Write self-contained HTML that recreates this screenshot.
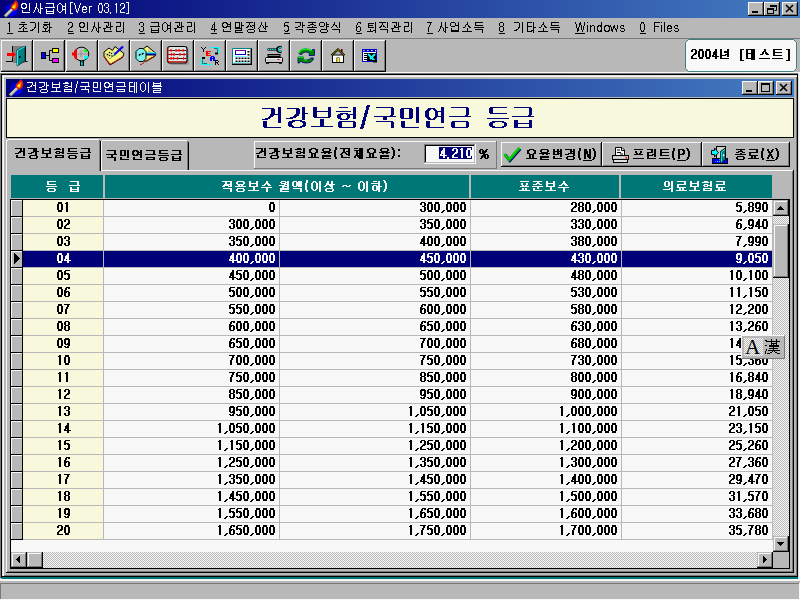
<!DOCTYPE html>
<html><head><meta charset="utf-8"><style>
html,body{margin:0;padding:0;width:800px;height:600px;overflow:hidden;background:#b8b8b8;font-family:"Liberation Sans",sans-serif;}
div{position:absolute;box-sizing:border-box;}
svg.ov{position:absolute;left:0;top:0;width:800px;height:600px;}
</style></head><body>
<div style="left:0px;top:0px;width:800px;height:18px;background:linear-gradient(to right,#000078 0%,#447cc1 100%);"></div>
<div style="left:748px;top:2px;width:16px;height:14px;background:#b8b8b8;"></div>
<div style="left:748px;top:2px;width:16px;height:1px;background:#f8f8f8;"></div>
<div style="left:748px;top:2px;width:1px;height:14px;background:#f8f8f8;"></div>
<div style="left:748px;top:15px;width:16px;height:1px;background:#000;"></div>
<div style="left:763px;top:2px;width:1px;height:14px;background:#000;"></div>
<div style="left:749px;top:14px;width:14px;height:1px;background:#787878;"></div>
<div style="left:762px;top:3px;width:1px;height:12px;background:#787878;"></div>
<div style="left:764px;top:2px;width:16px;height:14px;background:#b8b8b8;"></div>
<div style="left:764px;top:2px;width:16px;height:1px;background:#f8f8f8;"></div>
<div style="left:764px;top:2px;width:1px;height:14px;background:#f8f8f8;"></div>
<div style="left:764px;top:15px;width:16px;height:1px;background:#000;"></div>
<div style="left:779px;top:2px;width:1px;height:14px;background:#000;"></div>
<div style="left:765px;top:14px;width:14px;height:1px;background:#787878;"></div>
<div style="left:778px;top:3px;width:1px;height:12px;background:#787878;"></div>
<div style="left:782px;top:2px;width:16px;height:14px;background:#b8b8b8;"></div>
<div style="left:782px;top:2px;width:16px;height:1px;background:#f8f8f8;"></div>
<div style="left:782px;top:2px;width:1px;height:14px;background:#f8f8f8;"></div>
<div style="left:782px;top:15px;width:16px;height:1px;background:#000;"></div>
<div style="left:797px;top:2px;width:1px;height:14px;background:#000;"></div>
<div style="left:783px;top:14px;width:14px;height:1px;background:#787878;"></div>
<div style="left:796px;top:3px;width:1px;height:12px;background:#787878;"></div>
<div style="left:7px;top:33px;width:6px;height:1px;background:#000;"></div>
<div style="left:68px;top:33px;width:6px;height:1px;background:#000;"></div>
<div style="left:139px;top:33px;width:6px;height:1px;background:#000;"></div>
<div style="left:211px;top:33px;width:6px;height:1px;background:#000;"></div>
<div style="left:284px;top:33px;width:6px;height:1px;background:#000;"></div>
<div style="left:356px;top:33px;width:6px;height:1px;background:#000;"></div>
<div style="left:427px;top:33px;width:6px;height:1px;background:#000;"></div>
<div style="left:499px;top:33px;width:6px;height:1px;background:#000;"></div>
<div style="left:575px;top:33px;width:10px;height:1px;background:#000;"></div>
<div style="left:640px;top:33px;width:6px;height:1px;background:#000;"></div>
<div style="left:0px;top:38px;width:800px;height:1px;background:#787878;"></div>
<div style="left:1px;top:40px;width:32px;height:32px;background:#b8b8b8;"></div>
<div style="left:1px;top:40px;width:32px;height:1px;background:#f8f8f8;"></div>
<div style="left:1px;top:40px;width:1px;height:32px;background:#f8f8f8;"></div>
<div style="left:1px;top:71px;width:32px;height:1px;background:#000;"></div>
<div style="left:32px;top:40px;width:1px;height:32px;background:#000;"></div>
<div style="left:2px;top:70px;width:30px;height:1px;background:#787878;"></div>
<div style="left:31px;top:41px;width:1px;height:30px;background:#787878;"></div>
<div style="left:33px;top:40px;width:32px;height:32px;background:#b8b8b8;"></div>
<div style="left:33px;top:40px;width:32px;height:1px;background:#f8f8f8;"></div>
<div style="left:33px;top:40px;width:1px;height:32px;background:#f8f8f8;"></div>
<div style="left:33px;top:71px;width:32px;height:1px;background:#000;"></div>
<div style="left:64px;top:40px;width:1px;height:32px;background:#000;"></div>
<div style="left:34px;top:70px;width:30px;height:1px;background:#787878;"></div>
<div style="left:63px;top:41px;width:1px;height:30px;background:#787878;"></div>
<div style="left:66px;top:40px;width:32px;height:32px;background:#b8b8b8;"></div>
<div style="left:66px;top:40px;width:32px;height:1px;background:#f8f8f8;"></div>
<div style="left:66px;top:40px;width:1px;height:32px;background:#f8f8f8;"></div>
<div style="left:66px;top:71px;width:32px;height:1px;background:#000;"></div>
<div style="left:97px;top:40px;width:1px;height:32px;background:#000;"></div>
<div style="left:67px;top:70px;width:30px;height:1px;background:#787878;"></div>
<div style="left:96px;top:41px;width:1px;height:30px;background:#787878;"></div>
<div style="left:98px;top:40px;width:32px;height:32px;background:#b8b8b8;"></div>
<div style="left:98px;top:40px;width:32px;height:1px;background:#f8f8f8;"></div>
<div style="left:98px;top:40px;width:1px;height:32px;background:#f8f8f8;"></div>
<div style="left:98px;top:71px;width:32px;height:1px;background:#000;"></div>
<div style="left:129px;top:40px;width:1px;height:32px;background:#000;"></div>
<div style="left:99px;top:70px;width:30px;height:1px;background:#787878;"></div>
<div style="left:128px;top:41px;width:1px;height:30px;background:#787878;"></div>
<div style="left:130px;top:40px;width:32px;height:32px;background:#b8b8b8;"></div>
<div style="left:130px;top:40px;width:32px;height:1px;background:#f8f8f8;"></div>
<div style="left:130px;top:40px;width:1px;height:32px;background:#f8f8f8;"></div>
<div style="left:130px;top:71px;width:32px;height:1px;background:#000;"></div>
<div style="left:161px;top:40px;width:1px;height:32px;background:#000;"></div>
<div style="left:131px;top:70px;width:30px;height:1px;background:#787878;"></div>
<div style="left:160px;top:41px;width:1px;height:30px;background:#787878;"></div>
<div style="left:162px;top:40px;width:32px;height:32px;background:#b8b8b8;"></div>
<div style="left:162px;top:40px;width:32px;height:1px;background:#f8f8f8;"></div>
<div style="left:162px;top:40px;width:1px;height:32px;background:#f8f8f8;"></div>
<div style="left:162px;top:71px;width:32px;height:1px;background:#000;"></div>
<div style="left:193px;top:40px;width:1px;height:32px;background:#000;"></div>
<div style="left:163px;top:70px;width:30px;height:1px;background:#787878;"></div>
<div style="left:192px;top:41px;width:1px;height:30px;background:#787878;"></div>
<div style="left:194px;top:40px;width:32px;height:32px;background:#b8b8b8;"></div>
<div style="left:194px;top:40px;width:32px;height:1px;background:#f8f8f8;"></div>
<div style="left:194px;top:40px;width:1px;height:32px;background:#f8f8f8;"></div>
<div style="left:194px;top:71px;width:32px;height:1px;background:#000;"></div>
<div style="left:225px;top:40px;width:1px;height:32px;background:#000;"></div>
<div style="left:195px;top:70px;width:30px;height:1px;background:#787878;"></div>
<div style="left:224px;top:41px;width:1px;height:30px;background:#787878;"></div>
<div style="left:226px;top:40px;width:32px;height:32px;background:#b8b8b8;"></div>
<div style="left:226px;top:40px;width:32px;height:1px;background:#f8f8f8;"></div>
<div style="left:226px;top:40px;width:1px;height:32px;background:#f8f8f8;"></div>
<div style="left:226px;top:71px;width:32px;height:1px;background:#000;"></div>
<div style="left:257px;top:40px;width:1px;height:32px;background:#000;"></div>
<div style="left:227px;top:70px;width:30px;height:1px;background:#787878;"></div>
<div style="left:256px;top:41px;width:1px;height:30px;background:#787878;"></div>
<div style="left:258px;top:40px;width:32px;height:32px;background:#b8b8b8;"></div>
<div style="left:258px;top:40px;width:32px;height:1px;background:#f8f8f8;"></div>
<div style="left:258px;top:40px;width:1px;height:32px;background:#f8f8f8;"></div>
<div style="left:258px;top:71px;width:32px;height:1px;background:#000;"></div>
<div style="left:289px;top:40px;width:1px;height:32px;background:#000;"></div>
<div style="left:259px;top:70px;width:30px;height:1px;background:#787878;"></div>
<div style="left:288px;top:41px;width:1px;height:30px;background:#787878;"></div>
<div style="left:290px;top:40px;width:32px;height:32px;background:#b8b8b8;"></div>
<div style="left:290px;top:40px;width:32px;height:1px;background:#f8f8f8;"></div>
<div style="left:290px;top:40px;width:1px;height:32px;background:#f8f8f8;"></div>
<div style="left:290px;top:71px;width:32px;height:1px;background:#000;"></div>
<div style="left:321px;top:40px;width:1px;height:32px;background:#000;"></div>
<div style="left:291px;top:70px;width:30px;height:1px;background:#787878;"></div>
<div style="left:320px;top:41px;width:1px;height:30px;background:#787878;"></div>
<div style="left:322px;top:40px;width:32px;height:32px;background:#b8b8b8;"></div>
<div style="left:322px;top:40px;width:32px;height:1px;background:#f8f8f8;"></div>
<div style="left:322px;top:40px;width:1px;height:32px;background:#f8f8f8;"></div>
<div style="left:322px;top:71px;width:32px;height:1px;background:#000;"></div>
<div style="left:353px;top:40px;width:1px;height:32px;background:#000;"></div>
<div style="left:323px;top:70px;width:30px;height:1px;background:#787878;"></div>
<div style="left:352px;top:41px;width:1px;height:30px;background:#787878;"></div>
<div style="left:354px;top:40px;width:32px;height:32px;background:#b8b8b8;"></div>
<div style="left:354px;top:40px;width:32px;height:1px;background:#f8f8f8;"></div>
<div style="left:354px;top:40px;width:1px;height:32px;background:#f8f8f8;"></div>
<div style="left:354px;top:71px;width:32px;height:1px;background:#000;"></div>
<div style="left:385px;top:40px;width:1px;height:32px;background:#000;"></div>
<div style="left:355px;top:70px;width:30px;height:1px;background:#787878;"></div>
<div style="left:384px;top:41px;width:1px;height:30px;background:#787878;"></div>
<div style="left:0px;top:72px;width:800px;height:1px;background:#f8f8f8;"></div>
<div style="left:0px;top:73px;width:800px;height:1px;background:#787878;"></div>
<div style="left:0px;top:74px;width:800px;height:1px;background:#000;"></div>
<div style="left:0px;top:73px;width:1px;height:505px;background:#787878;"></div>
<div style="left:1px;top:74px;width:1px;height:504px;background:#000;"></div>
<div style="left:2px;top:577px;width:796px;height:2px;background:#007777;"></div>
<div style="left:0px;top:579px;width:800px;height:1px;background:#f8f8f8;"></div>
<div style="left:798px;top:73px;width:1px;height:506px;background:#dfdfdf;"></div>
<div style="left:799px;top:73px;width:1px;height:506px;background:#f8f8f8;"></div>
<div style="left:0px;top:580px;width:800px;height:1px;background:#f8f8f8;"></div>
<div style="left:0px;top:583px;width:800px;height:1px;background:#787878;"></div>
<div style="left:0px;top:583px;width:1px;height:17px;background:#787878;"></div>
<div style="left:0px;top:599px;width:800px;height:1px;background:#f8f8f8;"></div>
<div style="left:799px;top:583px;width:1px;height:17px;background:#f8f8f8;"></div>
<div style="left:2px;top:75px;width:796px;height:502px;background:#b8b8b8;"></div>
<div style="left:2px;top:75px;width:796px;height:1px;background:#dfdfdf;"></div>
<div style="left:2px;top:75px;width:1px;height:502px;background:#dfdfdf;"></div>
<div style="left:2px;top:576px;width:796px;height:1px;background:#000;"></div>
<div style="left:797px;top:75px;width:1px;height:502px;background:#000;"></div>
<div style="left:3px;top:575px;width:794px;height:1px;background:#787878;"></div>
<div style="left:796px;top:76px;width:1px;height:500px;background:#787878;"></div>
<div style="left:3px;top:76px;width:794px;height:1px;background:#f8f8f8;"></div>
<div style="left:3px;top:76px;width:1px;height:500px;background:#f8f8f8;"></div>
<div style="left:6px;top:79px;width:788px;height:18px;background:linear-gradient(to right,#000078 0%,#447cc1 100%);"></div>
<div style="left:742px;top:81px;width:16px;height:14px;background:#b8b8b8;"></div>
<div style="left:742px;top:81px;width:16px;height:1px;background:#f8f8f8;"></div>
<div style="left:742px;top:81px;width:1px;height:14px;background:#f8f8f8;"></div>
<div style="left:742px;top:94px;width:16px;height:1px;background:#000;"></div>
<div style="left:757px;top:81px;width:1px;height:14px;background:#000;"></div>
<div style="left:743px;top:93px;width:14px;height:1px;background:#787878;"></div>
<div style="left:756px;top:82px;width:1px;height:12px;background:#787878;"></div>
<div style="left:758px;top:81px;width:16px;height:14px;background:#b8b8b8;"></div>
<div style="left:758px;top:81px;width:16px;height:1px;background:#f8f8f8;"></div>
<div style="left:758px;top:81px;width:1px;height:14px;background:#f8f8f8;"></div>
<div style="left:758px;top:94px;width:16px;height:1px;background:#000;"></div>
<div style="left:773px;top:81px;width:1px;height:14px;background:#000;"></div>
<div style="left:759px;top:93px;width:14px;height:1px;background:#787878;"></div>
<div style="left:772px;top:82px;width:1px;height:12px;background:#787878;"></div>
<div style="left:776px;top:81px;width:16px;height:14px;background:#b8b8b8;"></div>
<div style="left:776px;top:81px;width:16px;height:1px;background:#f8f8f8;"></div>
<div style="left:776px;top:81px;width:1px;height:14px;background:#f8f8f8;"></div>
<div style="left:776px;top:94px;width:16px;height:1px;background:#000;"></div>
<div style="left:791px;top:81px;width:1px;height:14px;background:#000;"></div>
<div style="left:777px;top:93px;width:14px;height:1px;background:#787878;"></div>
<div style="left:790px;top:82px;width:1px;height:12px;background:#787878;"></div>
<div style="left:6px;top:98px;width:788px;height:40px;background:#f8f8dc;border:1px solid #000;"></div>
<div style="left:6px;top:140px;width:1px;height:433px;background:#f8f8f8;"></div>
<div style="left:100px;top:170px;width:693px;height:1px;background:#f8f8f8;"></div>
<div style="left:793px;top:170px;width:1px;height:403px;background:#000;"></div>
<div style="left:792px;top:171px;width:1px;height:401px;background:#787878;"></div>
<div style="left:6px;top:572px;width:788px;height:1px;background:#000;"></div>
<div style="left:7px;top:571px;width:786px;height:1px;background:#787878;"></div>
<div style="left:8px;top:139px;width:91px;height:1px;background:#f8f8f8;"></div>
<div style="left:7px;top:140px;width:1px;height:1px;background:#f8f8f8;"></div>
<div style="left:99px;top:140px;width:1px;height:31px;background:#787878;"></div>
<div style="left:100px;top:141px;width:1px;height:30px;background:#000;"></div>
<div style="left:102px;top:140px;width:85px;height:1px;background:#f8f8f8;"></div>
<div style="left:101px;top:141px;width:1px;height:29px;background:#f8f8f8;"></div>
<div style="left:187px;top:141px;width:1px;height:29px;background:#787878;"></div>
<div style="left:188px;top:142px;width:1px;height:28px;background:#000;"></div>
<div style="left:254px;top:141px;width:243px;height:28px;background:#b8b8b8;"></div>
<div style="left:254px;top:141px;width:243px;height:1px;background:#f8f8f8;"></div>
<div style="left:254px;top:141px;width:1px;height:28px;background:#f8f8f8;"></div>
<div style="left:254px;top:168px;width:243px;height:1px;background:#787878;"></div>
<div style="left:496px;top:141px;width:1px;height:28px;background:#787878;"></div>
<div style="left:424px;top:144px;width:52px;height:20px;background:#f8f8f8;"></div>
<div style="left:424px;top:144px;width:52px;height:1px;background:#787878;"></div>
<div style="left:424px;top:144px;width:1px;height:20px;background:#787878;"></div>
<div style="left:424px;top:163px;width:52px;height:1px;background:#f8f8f8;"></div>
<div style="left:475px;top:144px;width:1px;height:20px;background:#f8f8f8;"></div>
<div style="left:425px;top:145px;width:50px;height:1px;background:#000;"></div>
<div style="left:425px;top:145px;width:1px;height:18px;background:#000;"></div>
<div style="left:425px;top:162px;width:50px;height:1px;background:#b8b8b8;"></div>
<div style="left:474px;top:145px;width:1px;height:18px;background:#b8b8b8;"></div>
<div style="left:439px;top:147px;width:33px;height:12px;background:#000078;"></div>
<div style="left:501px;top:142px;width:101px;height:25px;background:#b8b8b8;"></div>
<div style="left:501px;top:142px;width:101px;height:1px;background:#f8f8f8;"></div>
<div style="left:501px;top:142px;width:1px;height:25px;background:#f8f8f8;"></div>
<div style="left:501px;top:166px;width:101px;height:1px;background:#000;"></div>
<div style="left:601px;top:142px;width:1px;height:25px;background:#000;"></div>
<div style="left:502px;top:165px;width:99px;height:1px;background:#787878;"></div>
<div style="left:600px;top:143px;width:1px;height:23px;background:#787878;"></div>
<div style="left:602px;top:142px;width:100px;height:25px;background:#b8b8b8;"></div>
<div style="left:602px;top:142px;width:100px;height:1px;background:#f8f8f8;"></div>
<div style="left:602px;top:142px;width:1px;height:25px;background:#f8f8f8;"></div>
<div style="left:602px;top:166px;width:100px;height:1px;background:#000;"></div>
<div style="left:701px;top:142px;width:1px;height:25px;background:#000;"></div>
<div style="left:603px;top:165px;width:98px;height:1px;background:#787878;"></div>
<div style="left:700px;top:143px;width:1px;height:23px;background:#787878;"></div>
<div style="left:702px;top:142px;width:88px;height:25px;background:#b8b8b8;"></div>
<div style="left:702px;top:142px;width:88px;height:1px;background:#f8f8f8;"></div>
<div style="left:702px;top:142px;width:1px;height:25px;background:#f8f8f8;"></div>
<div style="left:702px;top:166px;width:88px;height:1px;background:#000;"></div>
<div style="left:789px;top:142px;width:1px;height:25px;background:#000;"></div>
<div style="left:703px;top:165px;width:86px;height:1px;background:#787878;"></div>
<div style="left:788px;top:143px;width:1px;height:23px;background:#787878;"></div>
<div style="left:583px;top:160px;width:9px;height:1px;background:#000;"></div>
<div style="left:677px;top:160px;width:9px;height:1px;background:#000;"></div>
<div style="left:766px;top:160px;width:9px;height:1px;background:#000;"></div>
<div style="left:11px;top:175px;width:92px;height:23px;background:#007777;"></div>
<div style="left:105px;top:175px;width:364px;height:23px;background:#007777;"></div>
<div style="left:471px;top:175px;width:148px;height:23px;background:#007777;"></div>
<div style="left:621px;top:175px;width:151px;height:23px;background:#007777;"></div>
<div style="left:10px;top:199px;width:780px;height:370px;background:#000;"></div>
<div style="left:11px;top:200px;width:778px;height:368px;background:#f8f8f8;"></div>
<div style="left:11px;top:200px;width:12px;height:17px;background:#b8b8b8;"></div>
<div style="left:11px;top:200px;width:12px;height:1px;background:#f8f8f8;"></div>
<div style="left:11px;top:200px;width:1px;height:17px;background:#f8f8f8;"></div>
<div style="left:11px;top:216px;width:12px;height:1px;background:#000;"></div>
<div style="left:22px;top:200px;width:1px;height:17px;background:#000;"></div>
<div style="left:23px;top:200px;width:80px;height:16px;background:#f8f8dc;"></div>
<div style="left:23px;top:216px;width:749px;height:1px;background:#b8b8b8;"></div>
<div style="left:103px;top:200px;width:1px;height:17px;background:#b8b8b8;"></div>
<div style="left:279px;top:200px;width:1px;height:17px;background:#b8b8b8;"></div>
<div style="left:470px;top:200px;width:1px;height:17px;background:#b8b8b8;"></div>
<div style="left:621px;top:200px;width:1px;height:17px;background:#b8b8b8;"></div>
<div style="left:772px;top:200px;width:1px;height:17px;background:#b8b8b8;"></div>
<div style="left:11px;top:217px;width:12px;height:17px;background:#b8b8b8;"></div>
<div style="left:11px;top:217px;width:12px;height:1px;background:#f8f8f8;"></div>
<div style="left:11px;top:217px;width:1px;height:17px;background:#f8f8f8;"></div>
<div style="left:11px;top:233px;width:12px;height:1px;background:#000;"></div>
<div style="left:22px;top:217px;width:1px;height:17px;background:#000;"></div>
<div style="left:23px;top:217px;width:80px;height:16px;background:#f8f8dc;"></div>
<div style="left:23px;top:233px;width:749px;height:1px;background:#b8b8b8;"></div>
<div style="left:103px;top:217px;width:1px;height:17px;background:#b8b8b8;"></div>
<div style="left:279px;top:217px;width:1px;height:17px;background:#b8b8b8;"></div>
<div style="left:470px;top:217px;width:1px;height:17px;background:#b8b8b8;"></div>
<div style="left:621px;top:217px;width:1px;height:17px;background:#b8b8b8;"></div>
<div style="left:772px;top:217px;width:1px;height:17px;background:#b8b8b8;"></div>
<div style="left:11px;top:234px;width:12px;height:17px;background:#b8b8b8;"></div>
<div style="left:11px;top:234px;width:12px;height:1px;background:#f8f8f8;"></div>
<div style="left:11px;top:234px;width:1px;height:17px;background:#f8f8f8;"></div>
<div style="left:11px;top:250px;width:12px;height:1px;background:#000;"></div>
<div style="left:22px;top:234px;width:1px;height:17px;background:#000;"></div>
<div style="left:23px;top:234px;width:80px;height:16px;background:#f8f8dc;"></div>
<div style="left:23px;top:250px;width:749px;height:1px;background:#b8b8b8;"></div>
<div style="left:103px;top:234px;width:1px;height:17px;background:#b8b8b8;"></div>
<div style="left:279px;top:234px;width:1px;height:17px;background:#b8b8b8;"></div>
<div style="left:470px;top:234px;width:1px;height:17px;background:#b8b8b8;"></div>
<div style="left:621px;top:234px;width:1px;height:17px;background:#b8b8b8;"></div>
<div style="left:772px;top:234px;width:1px;height:17px;background:#b8b8b8;"></div>
<div style="left:11px;top:251px;width:12px;height:17px;background:#b8b8b8;"></div>
<div style="left:11px;top:251px;width:12px;height:1px;background:#f8f8f8;"></div>
<div style="left:11px;top:251px;width:1px;height:17px;background:#f8f8f8;"></div>
<div style="left:11px;top:267px;width:12px;height:1px;background:#000;"></div>
<div style="left:22px;top:251px;width:1px;height:17px;background:#000;"></div>
<div style="left:23px;top:251px;width:749px;height:16px;background:#000078;"></div>
<div style="left:14px;top:253px;width:1px;height:11px;background:#000;"></div>
<div style="left:15px;top:254px;width:1px;height:9px;background:#000;"></div>
<div style="left:16px;top:255px;width:1px;height:7px;background:#000;"></div>
<div style="left:17px;top:256px;width:1px;height:5px;background:#000;"></div>
<div style="left:18px;top:257px;width:1px;height:3px;background:#000;"></div>
<div style="left:19px;top:258px;width:1px;height:1px;background:#000;"></div>
<div style="left:23px;top:267px;width:749px;height:1px;background:#b8b8b8;"></div>
<div style="left:103px;top:251px;width:1px;height:17px;background:#b8b8b8;"></div>
<div style="left:279px;top:251px;width:1px;height:17px;background:#b8b8b8;"></div>
<div style="left:470px;top:251px;width:1px;height:17px;background:#b8b8b8;"></div>
<div style="left:621px;top:251px;width:1px;height:17px;background:#b8b8b8;"></div>
<div style="left:772px;top:251px;width:1px;height:17px;background:#b8b8b8;"></div>
<div style="left:11px;top:268px;width:12px;height:17px;background:#b8b8b8;"></div>
<div style="left:11px;top:268px;width:12px;height:1px;background:#f8f8f8;"></div>
<div style="left:11px;top:268px;width:1px;height:17px;background:#f8f8f8;"></div>
<div style="left:11px;top:284px;width:12px;height:1px;background:#000;"></div>
<div style="left:22px;top:268px;width:1px;height:17px;background:#000;"></div>
<div style="left:23px;top:268px;width:80px;height:16px;background:#f8f8dc;"></div>
<div style="left:23px;top:284px;width:749px;height:1px;background:#b8b8b8;"></div>
<div style="left:103px;top:268px;width:1px;height:17px;background:#b8b8b8;"></div>
<div style="left:279px;top:268px;width:1px;height:17px;background:#b8b8b8;"></div>
<div style="left:470px;top:268px;width:1px;height:17px;background:#b8b8b8;"></div>
<div style="left:621px;top:268px;width:1px;height:17px;background:#b8b8b8;"></div>
<div style="left:772px;top:268px;width:1px;height:17px;background:#b8b8b8;"></div>
<div style="left:11px;top:285px;width:12px;height:17px;background:#b8b8b8;"></div>
<div style="left:11px;top:285px;width:12px;height:1px;background:#f8f8f8;"></div>
<div style="left:11px;top:285px;width:1px;height:17px;background:#f8f8f8;"></div>
<div style="left:11px;top:301px;width:12px;height:1px;background:#000;"></div>
<div style="left:22px;top:285px;width:1px;height:17px;background:#000;"></div>
<div style="left:23px;top:285px;width:80px;height:16px;background:#f8f8dc;"></div>
<div style="left:23px;top:301px;width:749px;height:1px;background:#b8b8b8;"></div>
<div style="left:103px;top:285px;width:1px;height:17px;background:#b8b8b8;"></div>
<div style="left:279px;top:285px;width:1px;height:17px;background:#b8b8b8;"></div>
<div style="left:470px;top:285px;width:1px;height:17px;background:#b8b8b8;"></div>
<div style="left:621px;top:285px;width:1px;height:17px;background:#b8b8b8;"></div>
<div style="left:772px;top:285px;width:1px;height:17px;background:#b8b8b8;"></div>
<div style="left:11px;top:302px;width:12px;height:17px;background:#b8b8b8;"></div>
<div style="left:11px;top:302px;width:12px;height:1px;background:#f8f8f8;"></div>
<div style="left:11px;top:302px;width:1px;height:17px;background:#f8f8f8;"></div>
<div style="left:11px;top:318px;width:12px;height:1px;background:#000;"></div>
<div style="left:22px;top:302px;width:1px;height:17px;background:#000;"></div>
<div style="left:23px;top:302px;width:80px;height:16px;background:#f8f8dc;"></div>
<div style="left:23px;top:318px;width:749px;height:1px;background:#b8b8b8;"></div>
<div style="left:103px;top:302px;width:1px;height:17px;background:#b8b8b8;"></div>
<div style="left:279px;top:302px;width:1px;height:17px;background:#b8b8b8;"></div>
<div style="left:470px;top:302px;width:1px;height:17px;background:#b8b8b8;"></div>
<div style="left:621px;top:302px;width:1px;height:17px;background:#b8b8b8;"></div>
<div style="left:772px;top:302px;width:1px;height:17px;background:#b8b8b8;"></div>
<div style="left:11px;top:319px;width:12px;height:17px;background:#b8b8b8;"></div>
<div style="left:11px;top:319px;width:12px;height:1px;background:#f8f8f8;"></div>
<div style="left:11px;top:319px;width:1px;height:17px;background:#f8f8f8;"></div>
<div style="left:11px;top:335px;width:12px;height:1px;background:#000;"></div>
<div style="left:22px;top:319px;width:1px;height:17px;background:#000;"></div>
<div style="left:23px;top:319px;width:80px;height:16px;background:#f8f8dc;"></div>
<div style="left:23px;top:335px;width:749px;height:1px;background:#b8b8b8;"></div>
<div style="left:103px;top:319px;width:1px;height:17px;background:#b8b8b8;"></div>
<div style="left:279px;top:319px;width:1px;height:17px;background:#b8b8b8;"></div>
<div style="left:470px;top:319px;width:1px;height:17px;background:#b8b8b8;"></div>
<div style="left:621px;top:319px;width:1px;height:17px;background:#b8b8b8;"></div>
<div style="left:772px;top:319px;width:1px;height:17px;background:#b8b8b8;"></div>
<div style="left:11px;top:336px;width:12px;height:17px;background:#b8b8b8;"></div>
<div style="left:11px;top:336px;width:12px;height:1px;background:#f8f8f8;"></div>
<div style="left:11px;top:336px;width:1px;height:17px;background:#f8f8f8;"></div>
<div style="left:11px;top:352px;width:12px;height:1px;background:#000;"></div>
<div style="left:22px;top:336px;width:1px;height:17px;background:#000;"></div>
<div style="left:23px;top:336px;width:80px;height:16px;background:#f8f8dc;"></div>
<div style="left:23px;top:352px;width:749px;height:1px;background:#b8b8b8;"></div>
<div style="left:103px;top:336px;width:1px;height:17px;background:#b8b8b8;"></div>
<div style="left:279px;top:336px;width:1px;height:17px;background:#b8b8b8;"></div>
<div style="left:470px;top:336px;width:1px;height:17px;background:#b8b8b8;"></div>
<div style="left:621px;top:336px;width:1px;height:17px;background:#b8b8b8;"></div>
<div style="left:772px;top:336px;width:1px;height:17px;background:#b8b8b8;"></div>
<div style="left:11px;top:353px;width:12px;height:17px;background:#b8b8b8;"></div>
<div style="left:11px;top:353px;width:12px;height:1px;background:#f8f8f8;"></div>
<div style="left:11px;top:353px;width:1px;height:17px;background:#f8f8f8;"></div>
<div style="left:11px;top:369px;width:12px;height:1px;background:#000;"></div>
<div style="left:22px;top:353px;width:1px;height:17px;background:#000;"></div>
<div style="left:23px;top:353px;width:80px;height:16px;background:#f8f8dc;"></div>
<div style="left:23px;top:369px;width:749px;height:1px;background:#b8b8b8;"></div>
<div style="left:103px;top:353px;width:1px;height:17px;background:#b8b8b8;"></div>
<div style="left:279px;top:353px;width:1px;height:17px;background:#b8b8b8;"></div>
<div style="left:470px;top:353px;width:1px;height:17px;background:#b8b8b8;"></div>
<div style="left:621px;top:353px;width:1px;height:17px;background:#b8b8b8;"></div>
<div style="left:772px;top:353px;width:1px;height:17px;background:#b8b8b8;"></div>
<div style="left:11px;top:370px;width:12px;height:17px;background:#b8b8b8;"></div>
<div style="left:11px;top:370px;width:12px;height:1px;background:#f8f8f8;"></div>
<div style="left:11px;top:370px;width:1px;height:17px;background:#f8f8f8;"></div>
<div style="left:11px;top:386px;width:12px;height:1px;background:#000;"></div>
<div style="left:22px;top:370px;width:1px;height:17px;background:#000;"></div>
<div style="left:23px;top:370px;width:80px;height:16px;background:#f8f8dc;"></div>
<div style="left:23px;top:386px;width:749px;height:1px;background:#b8b8b8;"></div>
<div style="left:103px;top:370px;width:1px;height:17px;background:#b8b8b8;"></div>
<div style="left:279px;top:370px;width:1px;height:17px;background:#b8b8b8;"></div>
<div style="left:470px;top:370px;width:1px;height:17px;background:#b8b8b8;"></div>
<div style="left:621px;top:370px;width:1px;height:17px;background:#b8b8b8;"></div>
<div style="left:772px;top:370px;width:1px;height:17px;background:#b8b8b8;"></div>
<div style="left:11px;top:387px;width:12px;height:17px;background:#b8b8b8;"></div>
<div style="left:11px;top:387px;width:12px;height:1px;background:#f8f8f8;"></div>
<div style="left:11px;top:387px;width:1px;height:17px;background:#f8f8f8;"></div>
<div style="left:11px;top:403px;width:12px;height:1px;background:#000;"></div>
<div style="left:22px;top:387px;width:1px;height:17px;background:#000;"></div>
<div style="left:23px;top:387px;width:80px;height:16px;background:#f8f8dc;"></div>
<div style="left:23px;top:403px;width:749px;height:1px;background:#b8b8b8;"></div>
<div style="left:103px;top:387px;width:1px;height:17px;background:#b8b8b8;"></div>
<div style="left:279px;top:387px;width:1px;height:17px;background:#b8b8b8;"></div>
<div style="left:470px;top:387px;width:1px;height:17px;background:#b8b8b8;"></div>
<div style="left:621px;top:387px;width:1px;height:17px;background:#b8b8b8;"></div>
<div style="left:772px;top:387px;width:1px;height:17px;background:#b8b8b8;"></div>
<div style="left:11px;top:404px;width:12px;height:17px;background:#b8b8b8;"></div>
<div style="left:11px;top:404px;width:12px;height:1px;background:#f8f8f8;"></div>
<div style="left:11px;top:404px;width:1px;height:17px;background:#f8f8f8;"></div>
<div style="left:11px;top:420px;width:12px;height:1px;background:#000;"></div>
<div style="left:22px;top:404px;width:1px;height:17px;background:#000;"></div>
<div style="left:23px;top:404px;width:80px;height:16px;background:#f8f8dc;"></div>
<div style="left:23px;top:420px;width:749px;height:1px;background:#b8b8b8;"></div>
<div style="left:103px;top:404px;width:1px;height:17px;background:#b8b8b8;"></div>
<div style="left:279px;top:404px;width:1px;height:17px;background:#b8b8b8;"></div>
<div style="left:470px;top:404px;width:1px;height:17px;background:#b8b8b8;"></div>
<div style="left:621px;top:404px;width:1px;height:17px;background:#b8b8b8;"></div>
<div style="left:772px;top:404px;width:1px;height:17px;background:#b8b8b8;"></div>
<div style="left:11px;top:421px;width:12px;height:17px;background:#b8b8b8;"></div>
<div style="left:11px;top:421px;width:12px;height:1px;background:#f8f8f8;"></div>
<div style="left:11px;top:421px;width:1px;height:17px;background:#f8f8f8;"></div>
<div style="left:11px;top:437px;width:12px;height:1px;background:#000;"></div>
<div style="left:22px;top:421px;width:1px;height:17px;background:#000;"></div>
<div style="left:23px;top:421px;width:80px;height:16px;background:#f8f8dc;"></div>
<div style="left:23px;top:437px;width:749px;height:1px;background:#b8b8b8;"></div>
<div style="left:103px;top:421px;width:1px;height:17px;background:#b8b8b8;"></div>
<div style="left:279px;top:421px;width:1px;height:17px;background:#b8b8b8;"></div>
<div style="left:470px;top:421px;width:1px;height:17px;background:#b8b8b8;"></div>
<div style="left:621px;top:421px;width:1px;height:17px;background:#b8b8b8;"></div>
<div style="left:772px;top:421px;width:1px;height:17px;background:#b8b8b8;"></div>
<div style="left:11px;top:438px;width:12px;height:17px;background:#b8b8b8;"></div>
<div style="left:11px;top:438px;width:12px;height:1px;background:#f8f8f8;"></div>
<div style="left:11px;top:438px;width:1px;height:17px;background:#f8f8f8;"></div>
<div style="left:11px;top:454px;width:12px;height:1px;background:#000;"></div>
<div style="left:22px;top:438px;width:1px;height:17px;background:#000;"></div>
<div style="left:23px;top:438px;width:80px;height:16px;background:#f8f8dc;"></div>
<div style="left:23px;top:454px;width:749px;height:1px;background:#b8b8b8;"></div>
<div style="left:103px;top:438px;width:1px;height:17px;background:#b8b8b8;"></div>
<div style="left:279px;top:438px;width:1px;height:17px;background:#b8b8b8;"></div>
<div style="left:470px;top:438px;width:1px;height:17px;background:#b8b8b8;"></div>
<div style="left:621px;top:438px;width:1px;height:17px;background:#b8b8b8;"></div>
<div style="left:772px;top:438px;width:1px;height:17px;background:#b8b8b8;"></div>
<div style="left:11px;top:455px;width:12px;height:17px;background:#b8b8b8;"></div>
<div style="left:11px;top:455px;width:12px;height:1px;background:#f8f8f8;"></div>
<div style="left:11px;top:455px;width:1px;height:17px;background:#f8f8f8;"></div>
<div style="left:11px;top:471px;width:12px;height:1px;background:#000;"></div>
<div style="left:22px;top:455px;width:1px;height:17px;background:#000;"></div>
<div style="left:23px;top:455px;width:80px;height:16px;background:#f8f8dc;"></div>
<div style="left:23px;top:471px;width:749px;height:1px;background:#b8b8b8;"></div>
<div style="left:103px;top:455px;width:1px;height:17px;background:#b8b8b8;"></div>
<div style="left:279px;top:455px;width:1px;height:17px;background:#b8b8b8;"></div>
<div style="left:470px;top:455px;width:1px;height:17px;background:#b8b8b8;"></div>
<div style="left:621px;top:455px;width:1px;height:17px;background:#b8b8b8;"></div>
<div style="left:772px;top:455px;width:1px;height:17px;background:#b8b8b8;"></div>
<div style="left:11px;top:472px;width:12px;height:17px;background:#b8b8b8;"></div>
<div style="left:11px;top:472px;width:12px;height:1px;background:#f8f8f8;"></div>
<div style="left:11px;top:472px;width:1px;height:17px;background:#f8f8f8;"></div>
<div style="left:11px;top:488px;width:12px;height:1px;background:#000;"></div>
<div style="left:22px;top:472px;width:1px;height:17px;background:#000;"></div>
<div style="left:23px;top:472px;width:80px;height:16px;background:#f8f8dc;"></div>
<div style="left:23px;top:488px;width:749px;height:1px;background:#b8b8b8;"></div>
<div style="left:103px;top:472px;width:1px;height:17px;background:#b8b8b8;"></div>
<div style="left:279px;top:472px;width:1px;height:17px;background:#b8b8b8;"></div>
<div style="left:470px;top:472px;width:1px;height:17px;background:#b8b8b8;"></div>
<div style="left:621px;top:472px;width:1px;height:17px;background:#b8b8b8;"></div>
<div style="left:772px;top:472px;width:1px;height:17px;background:#b8b8b8;"></div>
<div style="left:11px;top:489px;width:12px;height:17px;background:#b8b8b8;"></div>
<div style="left:11px;top:489px;width:12px;height:1px;background:#f8f8f8;"></div>
<div style="left:11px;top:489px;width:1px;height:17px;background:#f8f8f8;"></div>
<div style="left:11px;top:505px;width:12px;height:1px;background:#000;"></div>
<div style="left:22px;top:489px;width:1px;height:17px;background:#000;"></div>
<div style="left:23px;top:489px;width:80px;height:16px;background:#f8f8dc;"></div>
<div style="left:23px;top:505px;width:749px;height:1px;background:#b8b8b8;"></div>
<div style="left:103px;top:489px;width:1px;height:17px;background:#b8b8b8;"></div>
<div style="left:279px;top:489px;width:1px;height:17px;background:#b8b8b8;"></div>
<div style="left:470px;top:489px;width:1px;height:17px;background:#b8b8b8;"></div>
<div style="left:621px;top:489px;width:1px;height:17px;background:#b8b8b8;"></div>
<div style="left:772px;top:489px;width:1px;height:17px;background:#b8b8b8;"></div>
<div style="left:11px;top:506px;width:12px;height:17px;background:#b8b8b8;"></div>
<div style="left:11px;top:506px;width:12px;height:1px;background:#f8f8f8;"></div>
<div style="left:11px;top:506px;width:1px;height:17px;background:#f8f8f8;"></div>
<div style="left:11px;top:522px;width:12px;height:1px;background:#000;"></div>
<div style="left:22px;top:506px;width:1px;height:17px;background:#000;"></div>
<div style="left:23px;top:506px;width:80px;height:16px;background:#f8f8dc;"></div>
<div style="left:23px;top:522px;width:749px;height:1px;background:#b8b8b8;"></div>
<div style="left:103px;top:506px;width:1px;height:17px;background:#b8b8b8;"></div>
<div style="left:279px;top:506px;width:1px;height:17px;background:#b8b8b8;"></div>
<div style="left:470px;top:506px;width:1px;height:17px;background:#b8b8b8;"></div>
<div style="left:621px;top:506px;width:1px;height:17px;background:#b8b8b8;"></div>
<div style="left:772px;top:506px;width:1px;height:17px;background:#b8b8b8;"></div>
<div style="left:11px;top:523px;width:12px;height:17px;background:#b8b8b8;"></div>
<div style="left:11px;top:523px;width:12px;height:1px;background:#f8f8f8;"></div>
<div style="left:11px;top:523px;width:1px;height:17px;background:#f8f8f8;"></div>
<div style="left:11px;top:539px;width:12px;height:1px;background:#000;"></div>
<div style="left:22px;top:523px;width:1px;height:17px;background:#000;"></div>
<div style="left:23px;top:523px;width:80px;height:16px;background:#f8f8dc;"></div>
<div style="left:23px;top:539px;width:749px;height:1px;background:#b8b8b8;"></div>
<div style="left:103px;top:523px;width:1px;height:17px;background:#b8b8b8;"></div>
<div style="left:279px;top:523px;width:1px;height:17px;background:#b8b8b8;"></div>
<div style="left:470px;top:523px;width:1px;height:17px;background:#b8b8b8;"></div>
<div style="left:621px;top:523px;width:1px;height:17px;background:#b8b8b8;"></div>
<div style="left:772px;top:523px;width:1px;height:17px;background:#b8b8b8;"></div>
<div style="left:773px;top:200px;width:16px;height:352px;background-color:#f8f8f8;background-image:linear-gradient(45deg,#b8b8b8 25%,transparent 25%,transparent 75%,#b8b8b8 75%),linear-gradient(45deg,#b8b8b8 25%,transparent 25%,transparent 75%,#b8b8b8 75%);background-size:2px 2px;background-position:0 0,1px 1px;"></div>
<div style="left:773px;top:200px;width:16px;height:16px;background:#b8b8b8;"></div>
<div style="left:774px;top:201px;width:14px;height:1px;background:#f8f8f8;"></div>
<div style="left:774px;top:201px;width:1px;height:14px;background:#f8f8f8;"></div>
<div style="left:773px;top:215px;width:16px;height:1px;background:#000;"></div>
<div style="left:788px;top:200px;width:1px;height:16px;background:#000;"></div>
<div style="left:774px;top:214px;width:14px;height:1px;background:#787878;"></div>
<div style="left:787px;top:201px;width:1px;height:14px;background:#787878;"></div>
<div style="left:773px;top:224px;width:16px;height:54px;background:#b8b8b8;"></div>
<div style="left:774px;top:225px;width:14px;height:1px;background:#f8f8f8;"></div>
<div style="left:774px;top:225px;width:1px;height:52px;background:#f8f8f8;"></div>
<div style="left:773px;top:277px;width:16px;height:1px;background:#000;"></div>
<div style="left:788px;top:224px;width:1px;height:54px;background:#000;"></div>
<div style="left:774px;top:276px;width:14px;height:1px;background:#787878;"></div>
<div style="left:787px;top:225px;width:1px;height:52px;background:#787878;"></div>
<div style="left:773px;top:536px;width:16px;height:16px;background:#b8b8b8;"></div>
<div style="left:774px;top:537px;width:14px;height:1px;background:#f8f8f8;"></div>
<div style="left:774px;top:537px;width:1px;height:14px;background:#f8f8f8;"></div>
<div style="left:773px;top:551px;width:16px;height:1px;background:#000;"></div>
<div style="left:788px;top:536px;width:1px;height:16px;background:#000;"></div>
<div style="left:774px;top:550px;width:14px;height:1px;background:#787878;"></div>
<div style="left:787px;top:537px;width:1px;height:14px;background:#787878;"></div>
<div style="left:780px;top:206px;width:1px;height:1px;background:#000;"></div>
<div style="left:779px;top:207px;width:3px;height:1px;background:#000;"></div>
<div style="left:778px;top:208px;width:5px;height:1px;background:#000;"></div>
<div style="left:777px;top:209px;width:7px;height:1px;background:#000;"></div>
<div style="left:777px;top:542px;width:7px;height:1px;background:#000;"></div>
<div style="left:778px;top:543px;width:5px;height:1px;background:#000;"></div>
<div style="left:779px;top:544px;width:3px;height:1px;background:#000;"></div>
<div style="left:780px;top:545px;width:1px;height:1px;background:#000;"></div>
<div style="left:11px;top:552px;width:762px;height:16px;background-color:#f8f8f8;background-image:linear-gradient(45deg,#b8b8b8 25%,transparent 25%,transparent 75%,#b8b8b8 75%),linear-gradient(45deg,#b8b8b8 25%,transparent 25%,transparent 75%,#b8b8b8 75%);background-size:2px 2px;background-position:0 0,1px 1px;"></div>
<div style="left:11px;top:552px;width:16px;height:16px;background:#b8b8b8;"></div>
<div style="left:12px;top:553px;width:14px;height:1px;background:#f8f8f8;"></div>
<div style="left:12px;top:553px;width:1px;height:14px;background:#f8f8f8;"></div>
<div style="left:11px;top:567px;width:16px;height:1px;background:#000;"></div>
<div style="left:26px;top:552px;width:1px;height:16px;background:#000;"></div>
<div style="left:12px;top:566px;width:14px;height:1px;background:#787878;"></div>
<div style="left:25px;top:553px;width:1px;height:14px;background:#787878;"></div>
<div style="left:27px;top:552px;width:16px;height:16px;background:#b8b8b8;"></div>
<div style="left:28px;top:553px;width:14px;height:1px;background:#f8f8f8;"></div>
<div style="left:28px;top:553px;width:1px;height:14px;background:#f8f8f8;"></div>
<div style="left:27px;top:567px;width:16px;height:1px;background:#000;"></div>
<div style="left:42px;top:552px;width:1px;height:16px;background:#000;"></div>
<div style="left:28px;top:566px;width:14px;height:1px;background:#787878;"></div>
<div style="left:41px;top:553px;width:1px;height:14px;background:#787878;"></div>
<div style="left:757px;top:552px;width:16px;height:16px;background:#b8b8b8;"></div>
<div style="left:758px;top:553px;width:14px;height:1px;background:#f8f8f8;"></div>
<div style="left:758px;top:553px;width:1px;height:14px;background:#f8f8f8;"></div>
<div style="left:757px;top:567px;width:16px;height:1px;background:#000;"></div>
<div style="left:772px;top:552px;width:1px;height:16px;background:#000;"></div>
<div style="left:758px;top:566px;width:14px;height:1px;background:#787878;"></div>
<div style="left:771px;top:553px;width:1px;height:14px;background:#787878;"></div>
<div style="left:16px;top:559px;width:1px;height:1px;background:#000;"></div>
<div style="left:17px;top:558px;width:1px;height:3px;background:#000;"></div>
<div style="left:18px;top:557px;width:1px;height:5px;background:#000;"></div>
<div style="left:19px;top:556px;width:1px;height:7px;background:#000;"></div>
<div style="left:763px;top:556px;width:1px;height:7px;background:#000;"></div>
<div style="left:764px;top:557px;width:1px;height:5px;background:#000;"></div>
<div style="left:765px;top:558px;width:1px;height:3px;background:#000;"></div>
<div style="left:766px;top:559px;width:1px;height:1px;background:#000;"></div>
<div style="left:773px;top:552px;width:16px;height:16px;background:#b8b8b8;"></div>
<svg style="position:absolute;left:1px;top:0px;" width="18" height="18" viewBox="0 0 18 18"><ellipse cx="10.5" cy="10" rx="6.3" ry="6.3" fill="#0000d8"/><ellipse cx="11.5" cy="12" rx="4" ry="3.5" fill="#0000ff"/><path d="M2.8 15.2 L10.5 7.5 L12.8 9.8 L5 17.5 Z" fill="#c8c8c0" stroke="#383838" stroke-width="0.8"/><path d="M10 6.5 Q10.5 3.5 13 3 Q13 1 15 0.5 Q17.5 2.5 17 6 Q16.5 9.5 13.5 10.5 Q11.5 10 10 8 Z" fill="#ff1000" stroke="#804040" stroke-width="0.5"/><path d="M11 7 Q12 4.5 14 4.5 Q15 6.5 14 8.5 Q12.5 9 11 7.5 Z" fill="#ffe000"/><path d="M13.5 3.5 Q15 2.5 15.5 4 L15 6 L14 5.5Z" fill="#ff8000"/></svg>
<svg style="position:absolute;left:748px;top:2px;" width="16" height="14" viewBox="0 0 16 14"><rect x="4" y="9" width="6" height="2" fill="#000"/></svg>
<svg style="position:absolute;left:764px;top:2px;" width="16" height="14" viewBox="0 0 16 14"><path d="M6.5 3.5 h6 v5 h-2 M6.5 3.5 v1.5" stroke="#000" fill="none"/><rect x="6" y="3" width="7" height="2" fill="#000"/><rect x="3.5" y="6.5" width="6" height="5" fill="none" stroke="#000"/><rect x="3" y="6" width="7" height="2" fill="#000"/></svg>
<svg style="position:absolute;left:782px;top:2px;" width="16" height="14" viewBox="0 0 16 14"><path d="M4 3 L11 10 M11 3 L4 10" stroke="#000" stroke-width="1.6"/></svg>
<svg style="position:absolute;left:0px;top:42px;" width="32" height="28" viewBox="0 0 32 28"><rect x="13" y="4" width="12" height="17" fill="#808080"/><path d="M12.5 4 V19.5 H6" stroke="#000" fill="none" stroke-width="1"/><path d="M25.5 4 V19.5 H27.5" stroke="#000" fill="none" stroke-width="1"/><path d="M17 8 L25 4 L25 19 L17 24 Z" fill="#008080" stroke="#000" stroke-width="0.6"/><path d="M17.5 23.5 V8.5 L25 4.5" stroke="#00ffff" fill="none" stroke-width="1"/><rect x="19" y="14" width="1.5" height="2" fill="#000"/><rect x="7" y="11" width="6" height="3" fill="#ff0000"/><path d="M12 9 L16 12.5 L12 16 Z" fill="#ff0000"/></svg><svg style="position:absolute;left:33px;top:42px;" width="32" height="28" viewBox="0 0 32 28"><path d="M13 13.5 H16.5 M16.5 8.5 V18.5 M16.5 8.5 H19 M16.5 18.5 H19" stroke="#000" stroke-width="1" fill="none"/><rect x="8.5" y="10.5" width="4" height="6" fill="#0000ff" stroke="#000"/><rect x="19.5" y="6.5" width="6" height="4" fill="#ffff00" stroke="#000"/><rect x="19.5" y="16.5" width="6" height="4" fill="#ff00ff" stroke="#000"/></svg><svg style="position:absolute;left:66px;top:42px;" width="32" height="28" viewBox="0 0 32 28"><ellipse cx="15.5" cy="12" rx="7.3" ry="6.8" fill="#c0c0c0" stroke="#000" stroke-width="1"/><path d="M9 7.5 Q7 12 9 17 L11 17.5 L11 7 Z" fill="#ff0000"/><rect x="6" y="10.5" width="2" height="3" fill="#ff0000"/><path d="M18 7 Q21 7.5 22 10 L18 10 Z" fill="#00ff00"/><path d="M18 14 L22.5 14 Q22 16.5 18 17.5 Z" fill="#00ffff"/><path d="M15 8.5 V15 M11.5 12 H22" stroke="#909090" stroke-width="1"/><rect x="14" y="19" width="4" height="5" fill="#000"/><rect x="15.2" y="19.5" width="1.4" height="4" fill="#00ffff"/></svg><svg style="position:absolute;left:98px;top:42px;" width="32" height="28" viewBox="0 0 32 28"><path d="M6 10 L11 6 L14.5 8.5 L17 4.5 L26 11.5 L24.5 15.5 L12 23 L6 14.5 Z" fill="#f4f47a" stroke="#000" stroke-width="1"/><path d="M14.5 8.5 L17 12 L12 17 L7 11" stroke="#909090" stroke-width="0.8" fill="none"/><path d="M6.5 14.5 L12 22.5 L24.5 15" stroke="#c00000" stroke-width="1.3" fill="none" stroke-dasharray="1.5 1"/><path d="M16.5 12.5 L25 4.5" stroke="#0000ff" stroke-width="2.2"/><path d="M15.5 14 L17 12.5" stroke="#008080" stroke-width="1.2"/><circle cx="11.5" cy="10.5" r="0.8" fill="#000"/><circle cx="9.5" cy="12.5" r="0.8" fill="#000"/><circle cx="11.5" cy="13.5" r="0.8" fill="#000"/><circle cx="13.5" cy="11.5" r="0.8" fill="#000"/><circle cx="14" cy="14" r="0.8" fill="#000"/></svg><svg style="position:absolute;left:130px;top:42px;" width="32" height="28" viewBox="0 0 32 28"><path d="M13 7 L17 4 L26 11.5 L25 14 L17 19 L13 19 Z" fill="#f4f47a" stroke="#000" stroke-width="1"/><path d="M18 8 L23 11 L18 11 Z" fill="#b0b0b0"/><rect x="16" y="11" width="10" height="2.5" fill="#000080"/><rect x="16" y="10.5" width="10" height="1" fill="#00ffff"/><path d="M10.5 23 L17.5 18 L25 14" stroke="#c00000" stroke-width="1.3" fill="none" stroke-dasharray="1.5 1"/><path d="M9 6.5 L13 6.5 L16 9.5 L16 16.5 L13 19.5 L9 19.5 L6 16.5 L6 9.5 Z" fill="#7af0f0" stroke="#000" stroke-width="1"/><path d="M8.8 13.5 L10.5 12 M11.8 12.5 L13.5 11" stroke="#000" stroke-width="1.5"/></svg><svg style="position:absolute;left:162px;top:42px;" width="32" height="28" viewBox="0 0 32 28"><rect x="8" y="6.5" width="19" height="16.5" rx="2" fill="#989898"/><rect x="5.5" y="4.5" width="19.5" height="16.5" rx="2.5" fill="#d8e8e8" stroke="#000" stroke-width="1.2"/><path d="M6 19.8 H24.5 M5.8 6 V19.5" stroke="#c00000" stroke-width="1.2"/><path d="M6.5 8.5 H24 M6.5 12.5 H24 M6.5 16.5 H24" stroke="#000" stroke-width="0.9"/><rect x="8" y="7.3" width="2.2" height="2.2" fill="#ff0000" transform="rotate(45 9.1 8.4)"/><rect x="13" y="7.3" width="2.2" height="2.2" fill="#ff0000" transform="rotate(45 14.1 8.4)"/><rect x="16" y="7.3" width="2.2" height="2.2" fill="#ff0000" transform="rotate(45 17.1 8.4)"/><rect x="20" y="7.3" width="2.2" height="2.2" fill="#ff0000" transform="rotate(45 21.1 8.4)"/><rect x="8.5" y="11.3" width="2.2" height="2.2" fill="#ff0000" transform="rotate(45 9.6 12.4)"/><rect x="11" y="11.3" width="2.2" height="2.2" fill="#ff0000" transform="rotate(45 12.1 12.4)"/><rect x="17" y="11.3" width="2.2" height="2.2" fill="#ff0000" transform="rotate(45 18.1 12.4)"/><rect x="21" y="11.3" width="2.2" height="2.2" fill="#ff0000" transform="rotate(45 22.1 12.4)"/><rect x="8" y="15.3" width="2.2" height="2.2" fill="#ff0000" transform="rotate(45 9.1 16.4)"/><rect x="10.5" y="15.3" width="2.2" height="2.2" fill="#ff0000" transform="rotate(45 11.6 16.4)"/><rect x="14.5" y="15.3" width="2.2" height="2.2" fill="#ff0000" transform="rotate(45 15.6 16.4)"/><rect x="20.5" y="15.3" width="2.2" height="2.2" fill="#ff0000" transform="rotate(45 21.6 16.4)"/></svg><svg style="position:absolute;left:194px;top:42px;" width="32" height="28" viewBox="0 0 32 28"><path d="M16 5.5 H24.5 V11.5" stroke="#00ffff" stroke-width="1.2" fill="none"/><path d="M20 6.5 H23.5 V10.5" stroke="#008080" stroke-width="1" fill="none"/><rect x="21" y="10.5" width="3" height="2" fill="#000"/><path d="M18 22.5 H7.5 V16" stroke="#00ffff" stroke-width="1.2" fill="none"/><path d="M13 21.5 H8.5 V17.5" stroke="#008080" stroke-width="1" fill="none"/><rect x="8" y="15" width="3" height="2" fill="#000"/><rect x="7" y="5" width="1" height="1" fill="#000"/><rect x="11" y="5" width="1" height="1" fill="#000"/><rect x="8" y="6" width="1" height="1" fill="#000"/><rect x="10" y="6" width="1" height="1" fill="#000"/><rect x="9" y="7" width="1" height="1" fill="#000"/><rect x="9" y="8" width="1" height="1" fill="#000"/><rect x="9" y="9" width="1" height="1" fill="#000"/><rect x="12" y="9" width="2" height="1" fill="#ff0000"/><rect x="13" y="9" width="2" height="1" fill="#ff0000"/><rect x="14" y="9" width="2" height="1" fill="#ff0000"/><rect x="15" y="9" width="2" height="1" fill="#ff0000"/><rect x="12" y="10" width="2" height="1" fill="#ff0000"/><rect x="12" y="11" width="2" height="1" fill="#ff0000"/><rect x="13" y="11" width="2" height="1" fill="#ff0000"/><rect x="14" y="11" width="2" height="1" fill="#ff0000"/><rect x="12" y="12" width="2" height="1" fill="#ff0000"/><rect x="12" y="13" width="2" height="1" fill="#ff0000"/><rect x="13" y="13" width="2" height="1" fill="#ff0000"/><rect x="14" y="13" width="2" height="1" fill="#ff0000"/><rect x="15" y="13" width="2" height="1" fill="#ff0000"/><rect x="17" y="14" width="2" height="1" fill="#0000ff"/><rect x="18" y="14" width="2" height="1" fill="#0000ff"/><rect x="16" y="15" width="2" height="1" fill="#0000ff"/><rect x="19" y="15" width="2" height="1" fill="#0000ff"/><rect x="16" y="16" width="2" height="1" fill="#0000ff"/><rect x="17" y="16" width="2" height="1" fill="#0000ff"/><rect x="18" y="16" width="2" height="1" fill="#0000ff"/><rect x="19" y="16" width="2" height="1" fill="#0000ff"/><rect x="16" y="17" width="2" height="1" fill="#0000ff"/><rect x="19" y="17" width="2" height="1" fill="#0000ff"/><rect x="16" y="18" width="2" height="1" fill="#0000ff"/><rect x="19" y="18" width="2" height="1" fill="#0000ff"/><rect x="21" y="18" width="1" height="1" fill="#000"/><rect x="22" y="18" width="1" height="1" fill="#000"/><rect x="23" y="18" width="1" height="1" fill="#000"/><rect x="21" y="19" width="1" height="1" fill="#000"/><rect x="24" y="19" width="1" height="1" fill="#000"/><rect x="21" y="20" width="1" height="1" fill="#000"/><rect x="22" y="20" width="1" height="1" fill="#000"/><rect x="23" y="20" width="1" height="1" fill="#000"/><rect x="21" y="21" width="1" height="1" fill="#000"/><rect x="23" y="21" width="1" height="1" fill="#000"/><rect x="21" y="22" width="1" height="1" fill="#000"/><rect x="24" y="22" width="1" height="1" fill="#000"/></svg><svg style="position:absolute;left:226px;top:42px;" width="32" height="28" viewBox="0 0 32 28"><rect x="6" y="6" width="20" height="17" fill="#000"/><rect x="6" y="6" width="18.5" height="15.5" fill="#fff"/><path d="M6.5 22 V6.5 H25.5" stroke="#008080" stroke-width="1" fill="none"/><rect x="9.5" y="8.5" width="10" height="4" fill="#fff" stroke="#0000c0" stroke-width="1"/><rect x="9" y="8" width="11" height="1" fill="#800080"/><rect x="9.5" y="15.5" width="2" height="1.6" fill="#000"/><rect x="12.5" y="15.5" width="2" height="1.6" fill="#000"/><rect x="15.5" y="15.5" width="2" height="1.6" fill="#000"/><rect x="18.5" y="15.5" width="2" height="1.6" fill="#000"/><rect x="21.5" y="15.5" width="2" height="1.6" fill="#000"/><rect x="9.5" y="18.5" width="2" height="1.6" fill="#000"/><rect x="12.5" y="18.5" width="2" height="1.6" fill="#000"/><rect x="15.5" y="18.5" width="2" height="1.6" fill="#000"/><rect x="18.5" y="18.5" width="2" height="1.6" fill="#000"/><rect x="21.5" y="18.5" width="2" height="1.6" fill="#000"/><rect x="21.5" y="9" width="2" height="1.6" fill="#000"/><rect x="21.5" y="12" width="2" height="1.6" fill="#000"/><rect x="8" y="14" width="16" height="0.8" fill="#00ffff" opacity="0.6"/><rect x="8" y="20.2" width="16" height="0.8" fill="#00ffff" opacity="0.6"/></svg><svg style="position:absolute;left:258px;top:42px;" width="32" height="28" viewBox="0 0 32 28"><path d="M9.5 7.5 H20" stroke="#000" stroke-width="2.2"/><path d="M10 7.5 H19.5" stroke="#00ffff" stroke-width="1" stroke-dasharray="1.2 0.6"/><path d="M23.5 5 Q19 5 19.5 7.5 Q19 10 23.5 10" stroke="#000" stroke-width="2.4" fill="none"/><path d="M23 5.3 Q20 5.5 20.3 7.5 Q20 9.5 23 9.7" stroke="#00ffff" stroke-width="1" fill="none"/><rect x="9.5" y="12" width="13" height="3" fill="#000"/><rect x="10.5" y="13" width="11" height="1" fill="#808080"/><rect x="7.5" y="15.5" width="17" height="5" rx="1" fill="#e8e8e8" stroke="#000" stroke-width="1"/><rect x="8.5" y="17" width="15" height="3" fill="#c8c8c8"/><rect x="19.5" y="17" width="2" height="1" fill="#ff0000"/><rect x="8" y="20" width="3" height="1.8" fill="#000"/><rect x="21" y="20" width="3" height="1.8" fill="#000"/></svg><svg style="position:absolute;left:290px;top:42px;" width="32" height="28" viewBox="0 0 32 28"><path d="M9 12 Q9 7 16 7 Q20 7 21.5 9 L22.5 7.5 L24.5 7.5 L24.5 13.5 L19 13.5 L19.5 11.5 Q18 10 16 10 Q12 10 12 12.5 Z" fill="#008000" stroke="#000080" stroke-width="0.8"/><path d="M9.2 11.5 Q9.5 7.2 16 7.2 Q20 7.2 21.5 9.2" stroke="#00ff00" stroke-width="1.2" fill="none"/><path d="M23.5 16 Q23 21 16 21 Q12 21 10.5 19 L9.5 21 L8 21 L8 15 L13.5 15 L13 17 Q14 18 16 18 Q20 18 20.5 16 Z" fill="#008000" stroke="#000080" stroke-width="0.8"/><path d="M8 15.3 H14.5 M13.5 17.5 Q15 18.5 17 18.3" stroke="#00ff00" stroke-width="1" fill="none"/></svg><svg style="position:absolute;left:322px;top:42px;" width="32" height="28" viewBox="0 0 32 28"><rect x="19" y="7" width="1.6" height="3" fill="#800000"/><rect x="10.5" y="13" width="11" height="7.5" fill="#fff" stroke="#000" stroke-width="1"/><path d="M9.5 13.5 L16 7.5 L22.5 13.5" stroke="#000" stroke-width="2.2" fill="none"/><path d="M9.5 13.5 L16 7.5 L22.5 13.5" stroke="#ffff00" stroke-width="0.9" fill="none" stroke-dasharray="1 0.5"/><rect x="14.5" y="15.5" width="3" height="5" fill="#000"/><rect x="15.2" y="16" width="1.8" height="4" fill="#ffff00"/></svg><svg style="position:absolute;left:354px;top:42px;" width="32" height="28" viewBox="0 0 32 28"><rect x="8" y="7" width="15" height="13" fill="#0000c0"/><rect x="9" y="10" width="13" height="9" fill="#fff"/><rect x="9.3" y="8" width="1.2" height="1.2" fill="#fff"/><rect x="13.3" y="8" width="1.2" height="1.2" fill="#fff"/><rect x="17.3" y="8" width="1.2" height="1.2" fill="#fff"/><rect x="21" y="8" width="1.2" height="1.2" fill="#fff"/><path d="M10 11.5 H13 M10 13.5 H13 M10 15.5 H13 M10 17.5 H13" stroke="#000" stroke-width="1"/><rect x="13" y="11" width="9" height="8" fill="#000"/><path d="M14 12 L21 19 M21 12 L16 17" stroke="#00ffff" stroke-width="1.8"/><rect x="19" y="18" width="4" height="2.5" fill="#000"/></svg>
<svg style="position:absolute;left:685px;top:39px;" width="112" height="33" viewBox="0 0 112 33"><path d="M3.5 0.5 H108.5 L111.5 3.5 V29.5 L108.5 32.5 H3.5 L0.5 29.5 V3.5 Z" fill="#f8f8f8" stroke="#408080" stroke-width="1"/></svg>
<svg style="position:absolute;left:6px;top:79px;" width="18" height="18" viewBox="0 0 18 18"><ellipse cx="10.5" cy="10" rx="6.3" ry="6.3" fill="#0000d8"/><ellipse cx="11.5" cy="12" rx="4" ry="3.5" fill="#0000ff"/><path d="M2.8 15.2 L10.5 7.5 L12.8 9.8 L5 17.5 Z" fill="#c8c8c0" stroke="#383838" stroke-width="0.8"/><path d="M10 6.5 Q10.5 3.5 13 3 Q13 1 15 0.5 Q17.5 2.5 17 6 Q16.5 9.5 13.5 10.5 Q11.5 10 10 8 Z" fill="#ff1000" stroke="#804040" stroke-width="0.5"/><path d="M11 7 Q12 4.5 14 4.5 Q15 6.5 14 8.5 Q12.5 9 11 7.5 Z" fill="#ffe000"/><path d="M13.5 3.5 Q15 2.5 15.5 4 L15 6 L14 5.5Z" fill="#ff8000"/></svg>
<svg style="position:absolute;left:742px;top:81px;" width="16" height="14" viewBox="0 0 16 14"><rect x="4" y="9" width="6" height="2" fill="#000"/></svg>
<svg style="position:absolute;left:758px;top:81px;" width="16" height="14" viewBox="0 0 16 14"><rect x="3.5" y="2.5" width="8" height="8" fill="none" stroke="#000"/><rect x="3" y="2" width="9" height="2" fill="#000"/></svg>
<svg style="position:absolute;left:776px;top:81px;" width="16" height="14" viewBox="0 0 16 14"><path d="M4 3 L11 10 M11 3 L4 10" stroke="#000" stroke-width="1.6"/></svg>
<svg style="position:absolute;left:502px;top:144px;" width="21" height="21" viewBox="0 0 21 21"><path d="M2.5 10 L7 16 L17.5 4" stroke="#000080" stroke-width="2.8" fill="none" stroke-linejoin="miter" transform="translate(0.9 0.9)"/><path d="M2.5 10 L7 16 L17.5 4" stroke="#00b000" stroke-width="2.8" fill="none" stroke-linejoin="miter"/><path d="M2 9.5 L6.8 15.2 M7.5 15 L17 4" stroke="#00ff00" stroke-width="0.9" fill="none"/></svg>
<svg style="position:absolute;left:611px;top:146px;" width="19" height="18" viewBox="0 0 19 18"><path d="M4.5 1.5 H11 L13.5 4 V9.5 H4.5 Z" fill="#fff" stroke="#000" stroke-width="1"/><path d="M10.5 1.5 V4.5 H13.5" stroke="#000" fill="none" stroke-width="1"/><path d="M6 4 H9 M6 6.5 H10 M9 8 H12" stroke="#000" stroke-width="1"/><rect x="1.5" y="9.5" width="16" height="4" fill="#c0c0c0" stroke="#000" stroke-width="1"/><path d="M2.5 11.5 H14.5" stroke="#fff" stroke-width="1" stroke-dasharray="1 1"/><rect x="14.5" y="11" width="1.5" height="1.5" fill="#ff0000"/><rect x="2.5" y="13.5" width="14" height="3" fill="#e0e0e0" stroke="#000" stroke-width="1"/></svg>
<svg style="position:absolute;left:705px;top:141px;" width="30" height="26" viewBox="0 0 30 26"><defs><pattern id="dth" width="2" height="2" patternUnits="userSpaceOnUse"><rect width="2" height="2" fill="#0000ff"/><rect width="1" height="1" fill="#00ffff"/></pattern></defs><rect x="11.5" y="5.5" width="9" height="12" fill="#d0d0d0" stroke="#000" stroke-width="1"/><rect x="7.5" y="17.5" width="15" height="5" fill="#0000ff" stroke="#000" stroke-width="1"/><path d="M8 22 L15 18 L15 22 Z" fill="url(#dth)"/><path d="M15.5 10.5 L20.5 7 L20.5 18.5 L15.5 22.5 Z" fill="#008080" stroke="#000" stroke-width="1"/><path d="M16.3 21.5 V11 L20 8.5" stroke="#00ffff" stroke-width="1" fill="none"/><ellipse cx="18.6" cy="14.2" rx="0.7" ry="1.2" fill="#fff"/><path d="M6.5 9.5 H9.5 V7 L13.5 11.5 L9.5 16 V13.5 H6.5 Z" fill="#00ffff" stroke="#000" stroke-width="1"/></svg>
<svg class="ov" width="800" height="600" viewBox="0 0 800 600"><defs><path id="b0" d="M2 -10h4v1h-4zM9 -10h1v1h-1zM1 -9h2v1h-2zM5 -9h2v1h-2zM9 -9h1v1h-1zM1 -8h1v1h-1zM6 -8h1v1h-1zM9 -8h1v1h-1zM1 -7h1v1h-1zM6 -7h1v1h-1zM9 -7h1v1h-1zM1 -6h2v1h-2zM5 -6h2v1h-2zM9 -6h1v1h-1zM2 -5h4v1h-4zM9 -5h1v1h-1zM9 -4h1v1h-1zM2 -3h1v1h-1zM9 -3h1v1h-1zM2 -2h1v1h-1zM2 -1h8v1h-8z"/><path id="b1" d="M4 -10h1v1h-1zM8 -10h1v1h-1zM4 -9h1v1h-1zM8 -9h1v1h-1zM4 -8h1v1h-1zM8 -8h1v1h-1zM4 -7h1v1h-1zM8 -7h1v1h-1zM3 -6h2v1h-2zM8 -6h1v1h-1zM3 -5h1v1h-1zM5 -5h1v1h-1zM8 -5h3v1h-3zM3 -4h1v1h-1zM6 -4h1v1h-1zM8 -4h1v1h-1zM2 -3h1v1h-1zM6 -3h1v1h-1zM8 -3h1v1h-1zM2 -2h1v1h-1zM6 -2h1v1h-1zM8 -2h1v1h-1zM1 -1h1v1h-1zM7 -1h2v1h-2zM8 0h1v1h-1z"/><path id="b2" d="M2 -10h8v1h-8zM9 -9h1v1h-1zM9 -8h1v1h-1zM9 -7h1v1h-1zM1 -6h10v1h-10zM2 -4h1v1h-1zM9 -4h1v1h-1zM2 -3h1v1h-1zM9 -3h1v1h-1zM2 -2h8v1h-8zM2 -1h1v1h-1zM9 -1h1v1h-1zM2 0h8v1h-8z"/><path id="b3" d="M3 -10h2v1h-2zM9 -10h1v1h-1zM2 -9h1v1h-1zM5 -9h1v1h-1zM9 -9h1v1h-1zM1 -8h1v1h-1zM6 -8h1v1h-1zM9 -8h1v1h-1zM1 -7h1v1h-1zM6 -7h4v1h-4zM1 -6h1v1h-1zM6 -6h1v1h-1zM9 -6h1v1h-1zM1 -5h1v1h-1zM6 -5h1v1h-1zM9 -5h1v1h-1zM1 -4h1v1h-1zM6 -4h4v1h-4zM1 -3h1v1h-1zM6 -3h1v1h-1zM9 -3h1v1h-1zM2 -2h1v1h-1zM5 -2h1v1h-1zM9 -2h1v1h-1zM3 -1h2v1h-2zM9 -1h1v1h-1zM9 0h1v1h-1z"/><path id="b4" d="M2 -11h3v1h-3zM2 -10h1v1h-1zM2 -9h1v1h-1zM2 -8h1v1h-1zM2 -7h1v1h-1zM2 -6h1v1h-1zM2 -5h1v1h-1zM2 -4h1v1h-1zM2 -3h1v1h-1zM2 -2h1v1h-1zM2 -1h1v1h-1zM2 0h3v1h-3z"/><path id="b5" d="M0 -10h1v1h-1zM6 -10h1v1h-1zM0 -9h1v1h-1zM6 -9h1v1h-1zM1 -8h1v1h-1zM5 -8h1v1h-1zM1 -7h1v1h-1zM5 -7h1v1h-1zM1 -6h1v1h-1zM5 -6h1v1h-1zM1 -5h1v1h-1zM4 -5h1v1h-1zM2 -4h1v1h-1zM4 -4h1v1h-1zM2 -3h1v1h-1zM4 -3h1v1h-1zM2 -2h2v1h-2zM3 -1h1v1h-1z"/><path id="b6" d="M2 -7h3v1h-3zM1 -6h2v1h-2zM4 -6h2v1h-2zM1 -5h1v1h-1zM5 -5h1v1h-1zM1 -4h5v1h-5zM1 -3h1v1h-1zM1 -2h1v1h-1zM5 -2h1v1h-1zM2 -1h3v1h-3z"/><path id="b7" d="M1 -7h3v1h-3zM1 -6h1v1h-1zM1 -5h1v1h-1zM1 -4h1v1h-1zM1 -3h1v1h-1zM1 -2h1v1h-1zM1 -1h1v1h-1z"/><path id="b8" d="M2 -10h3v1h-3zM2 -9h1v1h-1zM4 -9h1v1h-1zM1 -8h1v1h-1zM5 -8h1v1h-1zM1 -7h1v1h-1zM5 -7h1v1h-1zM1 -6h1v1h-1zM5 -6h1v1h-1zM1 -5h1v1h-1zM5 -5h1v1h-1zM1 -4h1v1h-1zM5 -4h1v1h-1zM1 -3h1v1h-1zM5 -3h1v1h-1zM2 -2h1v1h-1zM4 -2h1v1h-1zM2 -1h3v1h-3z"/><path id="b9" d="M2 -10h3v1h-3zM1 -9h1v1h-1zM5 -9h1v1h-1zM1 -8h1v1h-1zM5 -8h1v1h-1zM5 -7h1v1h-1zM3 -6h2v1h-2zM5 -5h1v1h-1zM5 -4h1v1h-1zM1 -3h1v1h-1zM5 -3h1v1h-1zM1 -2h1v1h-1zM5 -2h1v1h-1zM2 -1h3v1h-3z"/><path id="b10" d="M1 -1h1v1h-1zM1 0h1v1h-1z"/><path id="b11" d="M3 -10h1v1h-1zM2 -9h2v1h-2zM3 -8h1v1h-1zM3 -7h1v1h-1zM3 -6h1v1h-1zM3 -5h1v1h-1zM3 -4h1v1h-1zM3 -3h1v1h-1zM3 -2h1v1h-1zM3 -1h1v1h-1z"/><path id="b12" d="M2 -10h3v1h-3zM1 -9h1v1h-1zM5 -9h1v1h-1zM1 -8h1v1h-1zM5 -8h1v1h-1zM5 -7h1v1h-1zM4 -6h2v1h-2zM3 -5h2v1h-2zM2 -4h1v1h-1zM1 -3h1v1h-1zM1 -2h1v1h-1zM1 -1h5v1h-5z"/><path id="b13" d="M1 -11h3v1h-3zM3 -10h1v1h-1zM3 -9h1v1h-1zM3 -8h1v1h-1zM3 -7h1v1h-1zM3 -6h1v1h-1zM3 -5h1v1h-1zM3 -4h1v1h-1zM3 -3h1v1h-1zM3 -2h1v1h-1zM3 -1h1v1h-1zM1 0h3v1h-3z"/><path id="b14" d="M1 -10h5v1h-5zM9 -10h1v1h-1zM6 -9h1v1h-1zM9 -9h1v1h-1zM6 -8h1v1h-1zM9 -8h1v1h-1zM6 -7h1v1h-1zM9 -7h1v1h-1zM6 -6h1v1h-1zM9 -6h1v1h-1zM5 -5h2v1h-2zM9 -5h1v1h-1zM5 -4h1v1h-1zM9 -4h1v1h-1zM3 -3h2v1h-2zM9 -3h1v1h-1zM1 -2h3v1h-3zM9 -2h1v1h-1zM9 -1h1v1h-1zM9 0h1v1h-1z"/><path id="b15" d="M2 -10h5v1h-5zM8 -10h1v1h-1zM2 -9h1v1h-1zM8 -9h1v1h-1zM2 -8h1v1h-1zM8 -8h1v1h-1zM2 -7h1v1h-1zM8 -7h1v1h-1zM2 -6h5v1h-5zM8 -6h1v1h-1zM2 -5h1v1h-1zM8 -5h3v1h-3zM2 -4h1v1h-1zM8 -4h1v1h-1zM2 -3h1v1h-1zM8 -3h1v1h-1zM2 -2h1v1h-1zM6 -2h3v1h-3zM2 -1h5v1h-5zM8 -1h1v1h-1zM8 0h1v1h-1z"/><path id="b16" d="M6 -10h1v1h-1zM6 -9h1v1h-1zM5 -8h2v1h-2zM4 -7h1v1h-1zM7 -7h1v1h-1zM4 -6h1v1h-1zM7 -6h2v1h-2zM2 -5h2v1h-2zM8 -5h2v1h-2zM6 -4h1v1h-1zM6 -3h1v1h-1zM6 -2h1v1h-1zM1 -1h10v1h-10z"/><path id="b17" d="M2 -10h8v1h-8zM2 -9h1v1h-1zM2 -8h1v1h-1zM2 -7h8v1h-8zM1 -5h10v1h-10zM2 -3h8v1h-8zM9 -2h1v1h-1zM9 -1h1v1h-1zM9 0h1v1h-1z"/><path id="b18" d="M1 -10h6v1h-6zM1 -9h1v1h-1zM1 -8h1v1h-1zM1 -7h1v1h-1zM1 -6h5v1h-5zM1 -5h1v1h-1zM1 -4h1v1h-1zM1 -3h1v1h-1zM1 -2h1v1h-1zM1 -1h1v1h-1z"/><path id="b19" d="M1 -10h1v1h-1zM1 -7h1v1h-1zM1 -6h1v1h-1zM1 -5h1v1h-1zM1 -4h1v1h-1zM1 -3h1v1h-1zM1 -2h1v1h-1zM1 -1h1v1h-1z"/><path id="b20" d="M1 -10h1v1h-1zM1 -9h1v1h-1zM1 -8h1v1h-1zM1 -7h1v1h-1zM1 -6h1v1h-1zM1 -5h1v1h-1zM1 -4h1v1h-1zM1 -3h1v1h-1zM1 -2h1v1h-1zM1 -1h1v1h-1z"/><path id="b21" d="M2 -7h3v1h-3zM1 -6h1v1h-1zM4 -6h1v1h-1zM1 -5h1v1h-1zM2 -4h3v1h-3zM5 -3h1v1h-1zM1 -2h1v1h-1zM5 -2h1v1h-1zM2 -1h3v1h-3z"/><path id="b22" d="M4 -10h4v1h-4zM2 -8h8v1h-8zM6 -7h1v1h-1zM5 -6h2v1h-2zM4 -5h1v1h-1zM7 -5h1v1h-1zM2 -4h2v1h-2zM6 -4h1v1h-1zM8 -4h2v1h-2zM6 -3h1v1h-1zM6 -2h1v1h-1zM1 -1h10v1h-10z"/><path id="b23" d="M3 -10h4v1h-4zM8 -10h1v1h-1zM8 -9h1v1h-1zM2 -8h7v1h-7zM3 -7h3v1h-3zM8 -7h1v1h-1zM2 -6h1v1h-1zM6 -6h1v1h-1zM8 -6h1v1h-1zM2 -5h1v1h-1zM6 -5h1v1h-1zM8 -5h3v1h-3zM3 -4h3v1h-3zM8 -4h1v1h-1zM4 -3h1v1h-1zM8 -3h1v1h-1zM4 -2h1v1h-1zM7 -2h2v1h-2zM1 -1h6v1h-6zM8 -1h1v1h-1zM8 0h1v1h-1z"/><path id="b24" d="M2 -10h5v1h-5zM8 -10h1v1h-1zM6 -9h1v1h-1zM8 -9h1v1h-1zM6 -8h1v1h-1zM8 -8h1v1h-1zM4 -7h1v1h-1zM6 -7h1v1h-1zM8 -7h1v1h-1zM4 -6h2v1h-2zM8 -6h3v1h-3zM4 -5h5v1h-5zM1 -4h3v1h-3zM8 -4h1v1h-1zM2 -3h1v1h-1zM8 -3h1v1h-1zM2 -2h1v1h-1zM2 -1h8v1h-8z"/><path id="b25" d="M2 -10h5v1h-5zM9 -10h1v1h-1zM6 -9h1v1h-1zM9 -9h1v1h-1zM6 -8h1v1h-1zM9 -8h1v1h-1zM6 -7h1v1h-1zM9 -7h1v1h-1zM2 -6h5v1h-5zM9 -6h1v1h-1zM2 -5h1v1h-1zM9 -5h1v1h-1zM2 -4h1v1h-1zM9 -4h1v1h-1zM2 -3h1v1h-1zM9 -3h1v1h-1zM2 -2h1v1h-1zM7 -2h1v1h-1zM9 -2h1v1h-1zM2 -1h5v1h-5zM9 -1h1v1h-1zM9 0h1v1h-1z"/><path id="b26" d="M4 -10h1v1h-1zM4 -9h1v1h-1zM3 -8h2v1h-2zM2 -7h1v1h-1zM4 -7h1v1h-1zM2 -6h1v1h-1zM4 -6h1v1h-1zM2 -5h1v1h-1zM4 -5h1v1h-1zM1 -4h1v1h-1zM4 -4h1v1h-1zM1 -3h6v1h-6zM4 -2h1v1h-1zM4 -1h1v1h-1z"/><path id="b27" d="M2 -10h4v1h-4zM9 -10h1v1h-1zM1 -9h2v1h-2zM5 -9h2v1h-2zM9 -9h1v1h-1zM1 -8h1v1h-1zM6 -8h4v1h-4zM1 -7h1v1h-1zM6 -7h1v1h-1zM9 -7h1v1h-1zM1 -6h2v1h-2zM5 -6h5v1h-5zM2 -5h4v1h-4zM9 -5h1v1h-1zM9 -4h1v1h-1zM2 -3h1v1h-1zM9 -3h1v1h-1zM2 -2h1v1h-1zM2 -1h8v1h-8z"/><path id="b28" d="M2 -10h5v1h-5zM8 -10h1v1h-1zM2 -9h1v1h-1zM6 -9h1v1h-1zM8 -9h1v1h-1zM2 -8h1v1h-1zM6 -8h1v1h-1zM8 -8h1v1h-1zM2 -7h1v1h-1zM6 -7h1v1h-1zM8 -7h3v1h-3zM2 -6h1v1h-1zM6 -6h1v1h-1zM8 -6h1v1h-1zM2 -5h5v1h-5zM8 -5h1v1h-1zM2 -4h7v1h-7zM8 -3h1v1h-1zM2 -2h7v1h-7zM2 -1h1v1h-1zM2 0h8v1h-8z"/><path id="b29" d="M1 -10h7v1h-7zM9 -10h1v1h-1zM4 -9h1v1h-1zM9 -9h1v1h-1zM4 -8h1v1h-1zM9 -8h1v1h-1zM3 -7h1v1h-1zM5 -7h1v1h-1zM7 -7h3v1h-3zM2 -6h2v1h-2zM5 -6h2v1h-2zM9 -6h1v1h-1zM1 -5h2v1h-2zM7 -5h1v1h-1zM9 -5h1v1h-1zM9 -4h1v1h-1zM3 -3h6v1h-6zM2 -2h1v1h-1zM9 -2h1v1h-1zM2 -1h1v1h-1zM9 -1h1v1h-1zM3 0h6v1h-6z"/><path id="b30" d="M4 -10h1v1h-1zM8 -10h1v1h-1zM4 -9h1v1h-1zM8 -9h1v1h-1zM4 -8h1v1h-1zM8 -8h1v1h-1zM3 -7h1v1h-1zM5 -7h1v1h-1zM8 -7h1v1h-1zM3 -6h1v1h-1zM6 -6h1v1h-1zM8 -6h3v1h-3zM2 -5h1v1h-1zM6 -5h1v1h-1zM8 -5h1v1h-1zM1 -4h1v1h-1zM7 -4h2v1h-2zM2 -3h1v1h-1zM8 -3h1v1h-1zM2 -2h1v1h-1zM2 -1h8v1h-8z"/><path id="b31" d="M2 -10h4v1h-4zM1 -9h1v1h-1zM1 -8h1v1h-1zM1 -7h4v1h-4zM1 -6h1v1h-1zM4 -6h2v1h-2zM5 -5h1v1h-1zM5 -4h1v1h-1zM5 -3h1v1h-1zM1 -2h1v1h-1zM4 -2h2v1h-2zM2 -1h3v1h-3z"/><path id="b32" d="M1 -10h6v1h-6zM8 -10h1v1h-1zM6 -9h1v1h-1zM8 -9h1v1h-1zM6 -8h1v1h-1zM8 -8h1v1h-1zM6 -7h1v1h-1zM8 -7h3v1h-3zM4 -6h2v1h-2zM8 -6h1v1h-1zM1 -5h3v1h-3zM8 -5h1v1h-1zM2 -3h7v1h-7zM8 -2h1v1h-1zM8 -1h1v1h-1zM8 0h1v1h-1z"/><path id="b33" d="M2 -10h8v1h-8zM6 -9h1v1h-1zM4 -8h4v1h-4zM2 -7h2v1h-2zM8 -7h2v1h-2zM6 -6h1v1h-1zM1 -5h10v1h-10zM3 -3h6v1h-6zM2 -2h1v1h-1zM9 -2h1v1h-1zM2 -1h1v1h-1zM9 -1h1v1h-1zM3 0h6v1h-6z"/><path id="b34" d="M2 -10h4v1h-4zM8 -10h1v1h-1zM1 -9h1v1h-1zM6 -9h1v1h-1zM8 -9h1v1h-1zM1 -8h1v1h-1zM6 -8h1v1h-1zM8 -8h3v1h-3zM1 -7h1v1h-1zM6 -7h1v1h-1zM8 -7h1v1h-1zM2 -6h4v1h-4zM8 -6h3v1h-3zM8 -5h1v1h-1zM8 -4h1v1h-1zM3 -3h6v1h-6zM2 -2h1v1h-1zM9 -2h1v1h-1zM2 -1h1v1h-1zM9 -1h1v1h-1zM3 0h6v1h-6z"/><path id="b35" d="M4 -10h1v1h-1zM9 -10h1v1h-1zM4 -9h1v1h-1zM9 -9h1v1h-1zM3 -8h2v1h-2zM9 -8h1v1h-1zM3 -7h1v1h-1zM5 -7h2v1h-2zM9 -7h1v1h-1zM2 -6h1v1h-1zM6 -6h1v1h-1zM9 -6h1v1h-1zM1 -5h1v1h-1zM7 -5h1v1h-1zM9 -5h1v1h-1zM2 -3h8v1h-8zM9 -2h1v1h-1zM9 -1h1v1h-1zM9 0h1v1h-1z"/><path id="b36" d="M3 -10h3v1h-3zM2 -9h1v1h-1zM5 -9h1v1h-1zM2 -8h1v1h-1zM1 -7h1v1h-1zM1 -6h1v1h-1zM3 -6h2v1h-2zM1 -5h2v1h-2zM5 -5h1v1h-1zM1 -4h1v1h-1zM5 -4h1v1h-1zM1 -3h1v1h-1zM5 -3h1v1h-1zM1 -2h1v1h-1zM5 -2h1v1h-1zM2 -1h3v1h-3z"/><path id="b37" d="M9 -10h1v1h-1zM2 -9h6v1h-6zM9 -9h1v1h-1zM2 -8h1v1h-1zM9 -8h1v1h-1zM2 -7h5v1h-5zM9 -7h1v1h-1zM2 -6h1v1h-1zM9 -6h1v1h-1zM2 -5h6v1h-6zM9 -5h1v1h-1zM9 -4h1v1h-1zM4 -3h1v1h-1zM9 -3h1v1h-1zM4 -2h1v1h-1zM7 -2h3v1h-3zM1 -1h6v1h-6zM9 -1h1v1h-1zM9 0h1v1h-1z"/><path id="b38" d="M1 -10h7v1h-7zM9 -10h1v1h-1zM4 -9h1v1h-1zM9 -9h1v1h-1zM4 -8h1v1h-1zM9 -8h1v1h-1zM3 -7h1v1h-1zM5 -7h1v1h-1zM9 -7h1v1h-1zM2 -6h2v1h-2zM5 -6h2v1h-2zM9 -6h1v1h-1zM1 -5h2v1h-2zM7 -5h1v1h-1zM9 -5h1v1h-1zM2 -3h8v1h-8zM9 -2h1v1h-1zM9 -1h1v1h-1zM9 0h1v1h-1z"/><path id="b39" d="M1 -10h5v1h-5zM4 -9h1v1h-1zM4 -8h1v1h-1zM3 -7h1v1h-1zM3 -6h1v1h-1zM2 -5h1v1h-1zM2 -4h1v1h-1zM2 -3h1v1h-1zM2 -2h1v1h-1zM2 -1h1v1h-1z"/><path id="b40" d="M2 -10h4v1h-4zM9 -10h1v1h-1zM1 -9h1v1h-1zM6 -9h1v1h-1zM9 -9h1v1h-1zM1 -8h1v1h-1zM6 -8h1v1h-1zM9 -8h1v1h-1zM1 -7h1v1h-1zM6 -7h4v1h-4zM2 -6h4v1h-4zM9 -6h1v1h-1zM9 -5h1v1h-1zM2 -4h1v1h-1zM9 -4h1v1h-1zM2 -3h1v1h-1zM9 -3h1v1h-1zM2 -2h8v1h-8zM2 -1h8v1h-8z"/><path id="b41" d="M2 -10h3v1h-3zM1 -9h1v1h-1zM5 -9h1v1h-1zM1 -8h1v1h-1zM5 -8h1v1h-1zM1 -7h1v1h-1zM5 -7h1v1h-1zM2 -6h3v1h-3zM1 -5h1v1h-1zM5 -5h1v1h-1zM1 -4h1v1h-1zM5 -4h1v1h-1zM1 -3h1v1h-1zM5 -3h1v1h-1zM1 -2h1v1h-1zM5 -2h1v1h-1zM2 -1h3v1h-3z"/><path id="b42" d="M0 -10h1v1h-1zM5 -10h1v1h-1zM9 -10h1v1h-1zM0 -9h1v1h-1zM4 -9h2v1h-2zM9 -9h1v1h-1zM1 -8h1v1h-1zM4 -8h2v1h-2zM9 -8h1v1h-1zM1 -7h1v1h-1zM4 -7h1v1h-1zM6 -7h1v1h-1zM9 -7h1v1h-1zM1 -6h1v1h-1zM4 -6h1v1h-1zM6 -6h1v1h-1zM8 -6h1v1h-1zM1 -5h1v1h-1zM3 -5h1v1h-1zM6 -5h1v1h-1zM8 -5h1v1h-1zM2 -4h2v1h-2zM6 -4h1v1h-1zM8 -4h1v1h-1zM2 -3h2v1h-2zM6 -3h1v1h-1zM8 -3h1v1h-1zM2 -2h2v1h-2zM7 -2h1v1h-1zM2 -1h1v1h-1zM7 -1h1v1h-1z"/><path id="b43" d="M1 -7h1v1h-1zM3 -7h2v1h-2zM1 -6h2v1h-2zM5 -6h1v1h-1zM1 -5h1v1h-1zM5 -5h1v1h-1zM1 -4h1v1h-1zM5 -4h1v1h-1zM1 -3h1v1h-1zM5 -3h1v1h-1zM1 -2h1v1h-1zM5 -2h1v1h-1zM1 -1h1v1h-1zM5 -1h1v1h-1z"/><path id="b44" d="M5 -10h1v1h-1zM5 -9h1v1h-1zM5 -8h1v1h-1zM2 -7h4v1h-4zM1 -6h2v1h-2zM4 -6h2v1h-2zM1 -5h1v1h-1zM5 -5h1v1h-1zM1 -4h1v1h-1zM5 -4h1v1h-1zM1 -3h1v1h-1zM5 -3h1v1h-1zM1 -2h2v1h-2zM4 -2h2v1h-2zM2 -1h4v1h-4z"/><path id="b45" d="M2 -7h4v1h-4zM1 -6h2v1h-2zM5 -6h2v1h-2zM1 -5h1v1h-1zM6 -5h1v1h-1zM1 -4h1v1h-1zM6 -4h1v1h-1zM1 -3h1v1h-1zM6 -3h1v1h-1zM1 -2h2v1h-2zM5 -2h2v1h-2zM2 -1h4v1h-4z"/><path id="b46" d="M0 -7h1v1h-1zM4 -7h1v1h-1zM7 -7h1v1h-1zM0 -6h1v1h-1zM3 -6h2v1h-2zM7 -6h1v1h-1zM1 -5h1v1h-1zM3 -5h2v1h-2zM7 -5h1v1h-1zM1 -4h1v1h-1zM3 -4h1v1h-1zM5 -4h1v1h-1zM7 -4h1v1h-1zM1 -3h2v1h-2zM5 -3h2v1h-2zM1 -2h2v1h-2zM6 -2h1v1h-1zM2 -1h1v1h-1zM6 -1h1v1h-1z"/><path id="b47" d="M1 -10h6v1h-6zM9 -10h1v1h-1zM6 -9h1v1h-1zM9 -9h1v1h-1zM6 -8h1v1h-1zM9 -8h1v1h-1zM5 -7h1v1h-1zM7 -7h3v1h-3zM4 -6h2v1h-2zM9 -6h1v1h-1zM1 -5h3v1h-3zM9 -5h1v1h-1zM9 -4h1v1h-1zM2 -3h1v1h-1zM9 -3h1v1h-1zM2 -2h1v1h-1zM2 -1h8v1h-8z"/><path id="b48" d="M1 -10h6v1h-6zM8 -10h1v1h-1zM6 -9h1v1h-1zM8 -9h1v1h-1zM6 -8h1v1h-1zM8 -8h1v1h-1zM6 -7h1v1h-1zM8 -7h3v1h-3zM4 -6h2v1h-2zM8 -6h1v1h-1zM1 -5h3v1h-3zM8 -5h1v1h-1zM8 -4h1v1h-1zM3 -3h6v1h-6zM2 -2h1v1h-1zM9 -2h1v1h-1zM2 -1h1v1h-1zM9 -1h1v1h-1zM3 0h6v1h-6z"/><path id="b49" d="M2 -10h1v1h-1zM9 -10h1v1h-1zM2 -9h1v1h-1zM9 -9h1v1h-1zM2 -8h8v1h-8zM2 -7h1v1h-1zM9 -7h1v1h-1zM2 -6h1v1h-1zM9 -6h1v1h-1zM2 -5h8v1h-8zM6 -4h1v1h-1zM6 -3h1v1h-1zM6 -2h1v1h-1zM1 -1h10v1h-10z"/><path id="b50" d="M3 -10h3v1h-3zM9 -10h1v1h-1zM1 -9h6v1h-6zM9 -9h1v1h-1zM9 -8h1v1h-1zM3 -7h3v1h-3zM9 -7h1v1h-1zM2 -6h1v1h-1zM6 -6h4v1h-4zM3 -5h3v1h-3zM9 -5h1v1h-1zM2 -3h8v1h-8zM2 -2h1v1h-1zM9 -2h1v1h-1zM2 -1h8v1h-8z"/><path id="b51" d="M3 -11h1v1h-1zM3 -10h1v1h-1zM3 -9h1v1h-1zM2 -8h1v1h-1zM2 -7h1v1h-1zM2 -6h1v1h-1zM2 -5h1v1h-1zM1 -4h1v1h-1zM1 -3h1v1h-1zM1 -2h1v1h-1zM1 -1h1v1h-1zM1 0h1v1h-1z"/><path id="b52" d="M2 -10h8v1h-8zM9 -9h1v1h-1zM9 -8h1v1h-1zM9 -7h1v1h-1zM1 -6h10v1h-10zM6 -5h1v1h-1zM6 -4h1v1h-1zM2 -3h8v1h-8zM9 -2h1v1h-1zM9 -1h1v1h-1zM9 0h1v1h-1z"/><path id="b53" d="M2 -10h5v1h-5zM9 -10h1v1h-1zM2 -9h1v1h-1zM6 -9h1v1h-1zM9 -9h1v1h-1zM2 -8h1v1h-1zM6 -8h1v1h-1zM9 -8h1v1h-1zM2 -7h1v1h-1zM6 -7h1v1h-1zM9 -7h1v1h-1zM2 -6h1v1h-1zM6 -6h1v1h-1zM9 -6h1v1h-1zM2 -5h5v1h-5zM9 -5h1v1h-1zM9 -4h1v1h-1zM2 -3h1v1h-1zM9 -3h1v1h-1zM2 -2h1v1h-1zM2 -1h8v1h-8z"/><path id="b54" d="M2 -10h8v1h-8zM9 -9h1v1h-1zM9 -8h1v1h-1zM9 -7h1v1h-1zM1 -6h10v1h-10zM2 -3h8v1h-8zM2 -2h1v1h-1zM9 -2h1v1h-1zM2 -1h8v1h-8z"/><path id="b55" d="M2 -10h4v1h-4zM7 -10h1v1h-1zM9 -10h1v1h-1zM2 -9h1v1h-1zM7 -9h1v1h-1zM9 -9h1v1h-1zM2 -8h1v1h-1zM7 -8h1v1h-1zM9 -8h1v1h-1zM2 -7h1v1h-1zM7 -7h1v1h-1zM9 -7h1v1h-1zM2 -6h6v1h-6zM9 -6h1v1h-1zM2 -5h1v1h-1zM7 -5h1v1h-1zM9 -5h1v1h-1zM2 -4h1v1h-1zM7 -4h1v1h-1zM9 -4h1v1h-1zM2 -3h1v1h-1zM7 -3h1v1h-1zM9 -3h1v1h-1zM2 -2h1v1h-1zM7 -2h1v1h-1zM9 -2h1v1h-1zM2 -1h4v1h-4zM7 -1h1v1h-1zM9 -1h1v1h-1zM7 0h1v1h-1zM9 0h1v1h-1z"/><path id="b56" d="M3 -10h2v1h-2zM9 -10h1v1h-1zM2 -9h1v1h-1zM5 -9h1v1h-1zM9 -9h1v1h-1zM1 -8h1v1h-1zM6 -8h1v1h-1zM9 -8h1v1h-1zM1 -7h1v1h-1zM6 -7h1v1h-1zM9 -7h1v1h-1zM1 -6h1v1h-1zM6 -6h1v1h-1zM9 -6h1v1h-1zM1 -5h1v1h-1zM6 -5h1v1h-1zM9 -5h1v1h-1zM1 -4h1v1h-1zM6 -4h1v1h-1zM9 -4h1v1h-1zM1 -3h1v1h-1zM6 -3h1v1h-1zM9 -3h1v1h-1zM2 -2h1v1h-1zM5 -2h1v1h-1zM9 -2h1v1h-1zM3 -1h2v1h-2zM9 -1h1v1h-1zM9 0h1v1h-1z"/><path id="b57" d="M2 -10h1v1h-1zM9 -10h1v1h-1zM2 -9h8v1h-8zM2 -8h1v1h-1zM9 -8h1v1h-1zM2 -7h8v1h-8zM1 -6h10v1h-10zM2 -4h8v1h-8zM9 -3h1v1h-1zM2 -2h8v1h-8zM2 -1h1v1h-1zM2 0h8v1h-8z"/><path id="b58" d="M19 -20h3v1h-3zM3 -19h12v1h-12zM19 -19h3v1h-3zM12 -18h4v1h-4zM19 -18h3v1h-3zM12 -17h4v1h-4zM19 -17h3v1h-3zM12 -16h4v1h-4zM19 -16h3v1h-3zM12 -15h4v1h-4zM19 -15h3v1h-3zM12 -14h4v1h-4zM19 -14h3v1h-3zM11 -13h11v1h-11zM11 -12h4v1h-4zM19 -12h3v1h-3zM10 -11h4v1h-4zM19 -11h3v1h-3zM9 -10h3v1h-3zM19 -10h3v1h-3zM6 -9h5v1h-5zM19 -9h3v1h-3zM3 -8h6v1h-6zM19 -8h3v1h-3zM19 -7h3v1h-3zM4 -6h4v1h-4zM19 -6h3v1h-3zM4 -5h4v1h-4zM19 -5h3v1h-3zM4 -4h4v1h-4zM4 -3h4v1h-4zM4 -2h4v1h-4zM4 -1h4v1h-4zM5 0h17v1h-17z"/><path id="b59" d="M18 -20h3v1h-3zM3 -19h12v1h-12zM18 -19h3v1h-3zM12 -18h4v1h-4zM18 -18h3v1h-3zM12 -17h4v1h-4zM18 -17h3v1h-3zM12 -16h4v1h-4zM18 -16h3v1h-3zM12 -15h4v1h-4zM18 -15h3v1h-3zM12 -14h4v1h-4zM18 -14h6v1h-6zM11 -13h4v1h-4zM18 -13h3v1h-3zM10 -12h5v1h-5zM18 -12h3v1h-3zM9 -11h4v1h-4zM18 -11h3v1h-3zM6 -10h6v1h-6zM18 -10h3v1h-3zM2 -9h7v1h-7zM18 -9h3v1h-3zM18 -8h3v1h-3zM8 -7h10v1h-10zM5 -6h6v1h-6zM16 -6h5v1h-5zM4 -5h5v1h-5zM18 -5h4v1h-4zM4 -4h4v1h-4zM19 -4h3v1h-3zM4 -3h4v1h-4zM19 -3h3v1h-3zM4 -2h5v1h-5zM18 -2h4v1h-4zM5 -1h5v1h-5zM16 -1h5v1h-5zM8 0h10v1h-10z"/><path id="b60" d="M4 -20h4v1h-4zM19 -20h3v1h-3zM4 -19h4v1h-4zM19 -19h3v1h-3zM4 -18h4v1h-4zM19 -18h3v1h-3zM4 -17h4v1h-4zM19 -17h3v1h-3zM4 -16h18v1h-18zM4 -15h4v1h-4zM19 -15h3v1h-3zM4 -14h4v1h-4zM19 -14h3v1h-3zM4 -13h4v1h-4zM19 -13h3v1h-3zM4 -12h4v1h-4zM19 -12h3v1h-3zM4 -11h4v1h-4zM19 -11h3v1h-3zM5 -10h16v1h-16zM11 -8h4v1h-4zM11 -7h4v1h-4zM11 -6h4v1h-4zM11 -5h4v1h-4zM11 -4h4v1h-4zM11 -3h4v1h-4zM11 -2h4v1h-4zM2 -1h22v1h-22z"/><path id="b61" d="M5 -20h9v1h-9zM19 -20h3v1h-3zM19 -19h3v1h-3zM19 -18h3v1h-3zM19 -17h3v1h-3zM2 -16h15v1h-15zM19 -16h3v1h-3zM19 -15h3v1h-3zM6 -14h8v1h-8zM19 -14h3v1h-3zM4 -13h5v1h-5zM12 -13h10v1h-10zM3 -12h4v1h-4zM13 -12h3v1h-3zM19 -12h3v1h-3zM3 -11h4v1h-4zM13 -11h3v1h-3zM19 -11h3v1h-3zM3 -10h4v1h-4zM13 -10h3v1h-3zM19 -10h3v1h-3zM4 -9h4v1h-4zM12 -9h3v1h-3zM19 -9h3v1h-3zM6 -8h8v1h-8zM5 -6h16v1h-16zM4 -5h4v1h-4zM19 -5h3v1h-3zM4 -4h4v1h-4zM19 -4h3v1h-3zM4 -3h4v1h-4zM19 -3h3v1h-3zM4 -2h4v1h-4zM19 -2h3v1h-3zM4 -1h4v1h-4zM19 -1h3v1h-3zM5 0h16v1h-16z"/><path id="b62" d="M8 -22h3v1h-3zM7 -21h4v1h-4zM7 -20h3v1h-3zM7 -19h3v1h-3zM7 -18h3v1h-3zM6 -17h3v1h-3zM6 -16h3v1h-3zM6 -15h3v1h-3zM5 -14h4v1h-4zM5 -13h3v1h-3zM5 -12h3v1h-3zM5 -11h3v1h-3zM4 -10h3v1h-3zM4 -9h3v1h-3zM4 -8h3v1h-3zM3 -7h4v1h-4zM3 -6h3v1h-3zM3 -5h3v1h-3zM3 -4h3v1h-3zM2 -3h4v1h-4zM2 -2h3v1h-3zM2 -1h3v1h-3zM1 0h4v1h-4zM1 1h3v1h-3z"/><path id="b63" d="M4 -20h17v1h-17zM19 -19h3v1h-3zM19 -18h3v1h-3zM19 -17h3v1h-3zM19 -16h3v1h-3zM19 -15h3v1h-3zM19 -14h3v1h-3zM19 -13h3v1h-3zM18 -12h3v1h-3zM2 -11h22v1h-22zM11 -10h4v1h-4zM11 -9h4v1h-4zM11 -8h4v1h-4zM4 -6h17v1h-17zM19 -5h3v1h-3zM19 -4h3v1h-3zM19 -3h3v1h-3zM19 -2h3v1h-3zM19 -1h3v1h-3zM19 0h3v1h-3z"/><path id="b64" d="M19 -20h3v1h-3zM4 -19h11v1h-11zM19 -19h3v1h-3zM3 -18h4v1h-4zM12 -18h4v1h-4zM19 -18h3v1h-3zM3 -17h4v1h-4zM12 -17h4v1h-4zM19 -17h3v1h-3zM3 -16h4v1h-4zM12 -16h4v1h-4zM19 -16h3v1h-3zM3 -15h4v1h-4zM12 -15h4v1h-4zM19 -15h3v1h-3zM3 -14h4v1h-4zM12 -14h4v1h-4zM19 -14h3v1h-3zM3 -13h4v1h-4zM12 -13h4v1h-4zM19 -13h3v1h-3zM3 -12h4v1h-4zM12 -12h4v1h-4zM19 -12h3v1h-3zM3 -11h4v1h-4zM12 -11h4v1h-4zM19 -11h3v1h-3zM3 -10h4v1h-4zM12 -10h4v1h-4zM19 -10h3v1h-3zM4 -9h11v1h-11zM19 -9h3v1h-3zM19 -8h3v1h-3zM19 -7h3v1h-3zM4 -6h4v1h-4zM19 -6h3v1h-3zM4 -5h4v1h-4zM19 -5h3v1h-3zM4 -4h4v1h-4zM4 -3h4v1h-4zM4 -2h4v1h-4zM4 -1h4v1h-4zM5 0h17v1h-17z"/><path id="b65" d="M19 -20h3v1h-3zM6 -19h7v1h-7zM19 -19h3v1h-3zM5 -18h4v1h-4zM11 -18h3v1h-3zM19 -18h3v1h-3zM4 -17h4v1h-4zM12 -17h3v1h-3zM19 -17h3v1h-3zM3 -16h4v1h-4zM13 -16h9v1h-9zM3 -15h4v1h-4zM13 -15h3v1h-3zM19 -15h3v1h-3zM3 -14h4v1h-4zM13 -14h3v1h-3zM19 -14h3v1h-3zM3 -13h4v1h-4zM13 -13h3v1h-3zM19 -13h3v1h-3zM3 -12h4v1h-4zM13 -12h3v1h-3zM19 -12h3v1h-3zM3 -11h4v1h-4zM13 -11h9v1h-9zM4 -10h4v1h-4zM12 -10h3v1h-3zM19 -10h3v1h-3zM5 -9h4v1h-4zM11 -9h3v1h-3zM19 -9h3v1h-3zM6 -8h7v1h-7zM19 -8h3v1h-3zM19 -7h3v1h-3zM4 -6h4v1h-4zM19 -6h3v1h-3zM4 -5h4v1h-4zM19 -5h3v1h-3zM4 -4h4v1h-4zM4 -3h4v1h-4zM4 -2h4v1h-4zM4 -1h4v1h-4zM5 0h17v1h-17z"/><path id="b66" d="M4 -20h17v1h-17zM19 -19h3v1h-3zM19 -18h3v1h-3zM19 -17h3v1h-3zM19 -16h3v1h-3zM19 -15h3v1h-3zM19 -14h3v1h-3zM19 -13h3v1h-3zM18 -12h3v1h-3zM2 -11h22v1h-22zM5 -6h16v1h-16zM4 -5h4v1h-4zM19 -5h3v1h-3zM4 -4h4v1h-4zM19 -4h3v1h-3zM4 -3h4v1h-4zM19 -3h3v1h-3zM4 -2h4v1h-4zM19 -2h3v1h-3zM4 -1h4v1h-4zM19 -1h3v1h-3zM5 0h16v1h-16z"/><path id="b67" d="M5 -20h17v1h-17zM4 -19h4v1h-4zM4 -18h4v1h-4zM4 -17h4v1h-4zM4 -16h4v1h-4zM4 -15h4v1h-4zM5 -14h17v1h-17zM2 -9h22v1h-22zM7 -6h12v1h-12zM5 -5h5v1h-5zM17 -5h4v1h-4zM4 -4h4v1h-4zM19 -4h3v1h-3zM4 -3h4v1h-4zM19 -3h3v1h-3zM4 -2h4v1h-4zM19 -2h3v1h-3zM5 -1h5v1h-5zM17 -1h4v1h-4zM7 0h12v1h-12z"/><path id="b68" d="M4 -20h17v1h-17zM19 -19h3v1h-3zM19 -18h3v1h-3zM19 -17h3v1h-3zM19 -16h3v1h-3zM19 -15h3v1h-3zM19 -14h3v1h-3zM19 -13h3v1h-3zM18 -12h3v1h-3zM2 -11h22v1h-22zM4 -7h4v1h-4zM19 -7h3v1h-3zM4 -6h4v1h-4zM19 -6h3v1h-3zM4 -5h4v1h-4zM19 -5h3v1h-3zM4 -4h18v1h-18zM4 -3h4v1h-4zM19 -3h3v1h-3zM4 -2h4v1h-4zM19 -2h3v1h-3zM4 -1h4v1h-4zM19 -1h3v1h-3zM4 0h18v1h-18z"/><path id="b69" d="M1 -10h7v1h-7zM9 -10h2v1h-2zM6 -9h2v1h-2zM9 -9h2v1h-2zM6 -8h2v1h-2zM9 -8h2v1h-2zM5 -7h6v1h-6zM4 -6h3v1h-3zM9 -6h2v1h-2zM1 -5h4v1h-4zM9 -5h2v1h-2zM9 -4h2v1h-2zM2 -3h2v1h-2zM9 -3h2v1h-2zM2 -2h2v1h-2zM2 -1h9v1h-9z"/><path id="b70" d="M1 -10h9v1h-9zM6 -9h4v1h-4zM6 -8h4v1h-4zM6 -7h6v1h-6zM4 -6h3v1h-3zM8 -6h2v1h-2zM1 -5h4v1h-4zM8 -5h2v1h-2zM8 -4h2v1h-2zM3 -3h7v1h-7zM2 -2h2v1h-2zM9 -2h2v1h-2zM2 -1h2v1h-2zM9 -1h2v1h-2zM3 0h7v1h-7z"/><path id="b71" d="M2 -10h2v1h-2zM9 -10h2v1h-2zM2 -9h2v1h-2zM9 -9h2v1h-2zM2 -8h9v1h-9zM2 -7h2v1h-2zM9 -7h2v1h-2zM2 -6h2v1h-2zM9 -6h2v1h-2zM2 -5h9v1h-9zM6 -4h2v1h-2zM6 -3h2v1h-2zM6 -2h2v1h-2zM1 -1h11v1h-11z"/><path id="b72" d="M3 -10h4v1h-4zM9 -10h2v1h-2zM1 -9h7v1h-7zM9 -9h2v1h-2zM9 -8h2v1h-2zM3 -7h4v1h-4zM9 -7h2v1h-2zM2 -6h2v1h-2zM6 -6h5v1h-5zM3 -5h4v1h-4zM9 -5h2v1h-2zM2 -3h9v1h-9zM2 -2h2v1h-2zM9 -2h2v1h-2zM2 -1h9v1h-9z"/><path id="b73" d="M2 -10h9v1h-9zM2 -9h2v1h-2zM2 -8h2v1h-2zM2 -7h9v1h-9zM1 -5h11v1h-11zM3 -3h7v1h-7zM2 -2h2v1h-2zM9 -2h2v1h-2zM2 -1h2v1h-2zM9 -1h2v1h-2zM3 0h7v1h-7z"/><path id="b74" d="M2 -10h9v1h-9zM9 -9h2v1h-2zM9 -8h2v1h-2zM9 -7h2v1h-2zM1 -6h11v1h-11zM2 -4h2v1h-2zM9 -4h2v1h-2zM2 -3h2v1h-2zM9 -3h2v1h-2zM2 -2h9v1h-9zM2 -1h2v1h-2zM9 -1h2v1h-2zM2 0h9v1h-9z"/><path id="b75" d="M2 -10h9v1h-9zM9 -9h2v1h-2zM9 -8h2v1h-2zM9 -7h2v1h-2zM1 -6h11v1h-11zM6 -5h2v1h-2zM6 -4h2v1h-2zM2 -3h9v1h-9zM9 -2h2v1h-2zM9 -1h2v1h-2zM9 0h2v1h-2z"/><path id="b76" d="M2 -10h6v1h-6zM9 -10h2v1h-2zM2 -9h2v1h-2zM6 -9h2v1h-2zM9 -9h2v1h-2zM2 -8h2v1h-2zM6 -8h2v1h-2zM9 -8h2v1h-2zM2 -7h2v1h-2zM6 -7h2v1h-2zM9 -7h2v1h-2zM2 -6h2v1h-2zM6 -6h2v1h-2zM9 -6h2v1h-2zM2 -5h6v1h-6zM9 -5h2v1h-2zM9 -4h2v1h-2zM2 -3h2v1h-2zM9 -3h2v1h-2zM2 -2h2v1h-2zM2 -1h9v1h-9z"/><path id="b77" d="M2 -10h5v1h-5zM9 -10h2v1h-2zM1 -9h3v1h-3zM5 -9h3v1h-3zM9 -9h2v1h-2zM1 -8h2v1h-2zM6 -8h5v1h-5zM1 -7h2v1h-2zM6 -7h2v1h-2zM9 -7h2v1h-2zM1 -6h3v1h-3zM5 -6h6v1h-6zM2 -5h5v1h-5zM9 -5h2v1h-2zM9 -4h2v1h-2zM2 -3h2v1h-2zM9 -3h2v1h-2zM2 -2h2v1h-2zM2 -1h9v1h-9z"/><path id="b78" d="M2 -10h9v1h-9zM9 -9h2v1h-2zM9 -8h2v1h-2zM9 -7h2v1h-2zM1 -6h11v1h-11zM2 -3h9v1h-9zM2 -2h2v1h-2zM9 -2h2v1h-2zM2 -1h9v1h-9z"/><path id="b79" d="M4 -10h5v1h-5zM2 -9h3v1h-3zM8 -9h3v1h-3zM2 -8h2v1h-2zM9 -8h2v1h-2zM2 -7h2v1h-2zM9 -7h2v1h-2zM2 -6h3v1h-3zM8 -6h3v1h-3zM4 -5h5v1h-5zM4 -4h2v1h-2zM7 -4h2v1h-2zM4 -3h2v1h-2zM7 -3h2v1h-2zM4 -2h2v1h-2zM7 -2h2v1h-2zM1 -1h11v1h-11z"/><path id="b80" d="M3 -10h7v1h-7zM2 -9h2v1h-2zM9 -9h2v1h-2zM2 -8h2v1h-2zM9 -8h2v1h-2zM3 -7h7v1h-7zM1 -6h11v1h-11zM4 -5h2v1h-2zM8 -5h2v1h-2zM2 -3h9v1h-9zM2 -2h9v1h-9zM2 -1h2v1h-2zM2 0h9v1h-9z"/><path id="b81" d="M2 -11h2v1h-2zM2 -10h2v1h-2zM2 -9h2v1h-2zM1 -8h2v1h-2zM1 -7h2v1h-2zM1 -6h2v1h-2zM1 -5h2v1h-2zM1 -4h2v1h-2zM1 -3h2v1h-2zM1 -2h2v1h-2zM2 -1h2v1h-2zM2 0h2v1h-2z"/><path id="b82" d="M1 -10h10v1h-10zM4 -9h2v1h-2zM9 -9h2v1h-2zM4 -8h2v1h-2zM9 -8h2v1h-2zM4 -7h2v1h-2zM7 -7h4v1h-4zM3 -6h4v1h-4zM9 -6h2v1h-2zM2 -5h2v1h-2zM6 -5h2v1h-2zM9 -5h2v1h-2zM1 -4h2v1h-2zM7 -4h4v1h-4zM2 -3h2v1h-2zM9 -3h2v1h-2zM2 -2h2v1h-2zM2 -1h9v1h-9z"/><path id="b83" d="M2 -10h4v1h-4zM7 -10h4v1h-4zM7 -9h4v1h-4zM2 -8h9v1h-9zM4 -7h2v1h-2zM7 -7h4v1h-4zM4 -6h2v1h-2zM7 -6h4v1h-4zM4 -5h7v1h-7zM4 -4h2v1h-2zM7 -4h4v1h-4zM3 -3h8v1h-8zM2 -2h2v1h-2zM5 -2h6v1h-6zM2 -1h2v1h-2zM6 -1h5v1h-5zM7 0h4v1h-4z"/><path id="b84" d="M0 -11h2v1h-2zM1 -10h2v1h-2zM1 -9h2v1h-2zM2 -8h2v1h-2zM2 -7h2v1h-2zM2 -6h2v1h-2zM2 -5h2v1h-2zM2 -4h2v1h-2zM2 -3h2v1h-2zM1 -2h2v1h-2zM1 -1h2v1h-2zM0 0h2v1h-2z"/><path id="b85" d="M1 -9h2v1h-2zM1 -8h2v1h-2zM1 -3h2v1h-2zM1 -2h2v1h-2z"/><path id="b86" d="M4 -10h2v1h-2zM4 -9h2v1h-2zM3 -8h3v1h-3zM2 -7h4v1h-4zM2 -6h4v1h-4zM2 -5h4v1h-4zM1 -4h2v1h-2zM4 -4h2v1h-2zM1 -3h7v1h-7zM4 -2h2v1h-2zM4 -1h2v1h-2z"/><path id="b87" d="M1 -1h2v1h-2zM1 0h2v1h-2z"/><path id="b88" d="M2 -10h4v1h-4zM1 -9h2v1h-2zM5 -9h2v1h-2zM1 -8h2v1h-2zM5 -8h2v1h-2zM5 -7h2v1h-2zM4 -6h3v1h-3zM3 -5h3v1h-3zM2 -4h2v1h-2zM1 -3h2v1h-2zM1 -2h2v1h-2zM1 -1h6v1h-6z"/><path id="b89" d="M3 -10h2v1h-2zM2 -9h3v1h-3zM3 -8h2v1h-2zM3 -7h2v1h-2zM3 -6h2v1h-2zM3 -5h2v1h-2zM3 -4h2v1h-2zM3 -3h2v1h-2zM3 -2h2v1h-2zM3 -1h2v1h-2z"/><path id="b90" d="M2 -10h4v1h-4zM2 -9h4v1h-4zM1 -8h2v1h-2zM5 -8h2v1h-2zM1 -7h2v1h-2zM5 -7h2v1h-2zM1 -6h2v1h-2zM5 -6h2v1h-2zM1 -5h2v1h-2zM5 -5h2v1h-2zM1 -4h2v1h-2zM5 -4h2v1h-2zM1 -3h2v1h-2zM5 -3h2v1h-2zM2 -2h4v1h-4zM2 -1h4v1h-4z"/><path id="b91" d="M2 -10h3v1h-3zM8 -10h2v1h-2zM1 -9h2v1h-2zM4 -9h2v1h-2zM7 -9h2v1h-2zM1 -8h2v1h-2zM4 -8h5v1h-5zM1 -7h2v1h-2zM4 -7h4v1h-4zM2 -6h5v1h-5zM5 -5h5v1h-5zM4 -4h4v1h-4zM9 -4h2v1h-2zM3 -3h5v1h-5zM9 -3h2v1h-2zM3 -2h2v1h-2zM6 -2h2v1h-2zM9 -2h2v1h-2zM2 -1h2v1h-2zM7 -1h3v1h-3z"/><path id="b92" d="M2 -10h2v1h-2zM6 -10h2v1h-2zM9 -10h2v1h-2zM2 -9h2v1h-2zM6 -9h2v1h-2zM9 -9h2v1h-2zM2 -8h9v1h-9zM2 -7h2v1h-2zM6 -7h2v1h-2zM9 -7h2v1h-2zM2 -6h2v1h-2zM6 -6h5v1h-5zM2 -5h6v1h-6zM9 -5h2v1h-2zM9 -4h2v1h-2zM2 -3h2v1h-2zM9 -3h2v1h-2zM2 -2h2v1h-2zM2 -1h9v1h-9z"/><path id="b93" d="M1 -10h7v1h-7zM9 -10h2v1h-2zM6 -9h2v1h-2zM9 -9h2v1h-2zM6 -8h5v1h-5zM6 -7h2v1h-2zM9 -7h2v1h-2zM4 -6h7v1h-7zM1 -5h4v1h-4zM9 -5h2v1h-2zM9 -4h2v1h-2zM3 -3h7v1h-7zM2 -2h2v1h-2zM9 -2h2v1h-2zM2 -1h2v1h-2zM9 -1h2v1h-2zM3 0h7v1h-7z"/><path id="b94" d="M1 -10h3v1h-3zM6 -10h2v1h-2zM1 -9h3v1h-3zM6 -9h2v1h-2zM1 -8h4v1h-4zM6 -8h2v1h-2zM1 -7h4v1h-4zM6 -7h2v1h-2zM1 -6h4v1h-4zM6 -6h2v1h-2zM1 -5h2v1h-2zM4 -5h4v1h-4zM1 -4h2v1h-2zM4 -4h4v1h-4zM1 -3h2v1h-2zM4 -3h4v1h-4zM1 -2h2v1h-2zM5 -2h3v1h-3zM1 -1h2v1h-2zM6 -1h2v1h-2z"/><path id="b95" d="M2 -10h9v1h-9zM3 -8h2v1h-2zM8 -8h2v1h-2zM3 -7h2v1h-2zM8 -7h2v1h-2zM4 -6h2v1h-2zM7 -6h2v1h-2zM2 -5h9v1h-9zM1 -1h11v1h-11z"/><path id="b96" d="M2 -10h6v1h-6zM9 -10h2v1h-2zM6 -9h2v1h-2zM9 -9h2v1h-2zM6 -8h2v1h-2zM9 -8h2v1h-2zM2 -7h6v1h-6zM9 -7h2v1h-2zM2 -6h2v1h-2zM9 -6h2v1h-2zM2 -5h2v1h-2zM7 -5h4v1h-4zM2 -4h6v1h-6zM9 -4h2v1h-2zM2 -3h2v1h-2zM9 -3h2v1h-2zM2 -2h2v1h-2zM2 -1h9v1h-9z"/><path id="b97" d="M2 -10h9v1h-9zM2 -9h2v1h-2zM2 -8h2v1h-2zM2 -7h9v1h-9zM2 -6h2v1h-2zM2 -5h2v1h-2zM2 -4h9v1h-9zM1 -1h11v1h-11z"/><path id="b98" d="M1 -10h6v1h-6zM1 -9h2v1h-2zM5 -9h3v1h-3zM1 -8h2v1h-2zM6 -8h2v1h-2zM1 -7h2v1h-2zM6 -7h2v1h-2zM1 -6h2v1h-2zM5 -6h3v1h-3zM1 -5h6v1h-6zM1 -4h2v1h-2zM1 -3h2v1h-2zM1 -2h2v1h-2zM1 -1h2v1h-2z"/><path id="b99" d="M2 -10h9v1h-9zM6 -9h2v1h-2zM4 -8h5v1h-5zM2 -7h3v1h-3zM8 -7h3v1h-3zM6 -6h2v1h-2zM1 -5h11v1h-11zM3 -3h7v1h-7zM2 -2h2v1h-2zM9 -2h2v1h-2zM2 -1h2v1h-2zM9 -1h2v1h-2zM3 0h7v1h-7z"/><path id="b100" d="M2 -10h9v1h-9zM9 -9h2v1h-2zM9 -8h2v1h-2zM2 -7h9v1h-9zM2 -6h2v1h-2zM2 -5h2v1h-2zM2 -4h9v1h-9zM4 -3h2v1h-2zM7 -3h2v1h-2zM4 -2h2v1h-2zM7 -2h2v1h-2zM1 -1h11v1h-11z"/><path id="b101" d="M1 -10h2v1h-2zM6 -10h2v1h-2zM1 -9h2v1h-2zM5 -9h2v1h-2zM2 -8h2v1h-2zM5 -8h2v1h-2zM2 -7h4v1h-4zM3 -6h2v1h-2zM3 -5h3v1h-3zM2 -4h4v1h-4zM2 -3h2v1h-2zM5 -3h2v1h-2zM1 -2h2v1h-2zM5 -2h2v1h-2zM1 -1h2v1h-2zM6 -1h2v1h-2z"/><path id="b102" d="M1 -10h10v1h-10zM4 -9h2v1h-2zM9 -9h2v1h-2zM4 -8h2v1h-2zM9 -8h2v1h-2zM3 -7h8v1h-8zM2 -6h6v1h-6zM9 -6h2v1h-2zM1 -5h3v1h-3zM7 -5h4v1h-4zM2 -3h9v1h-9zM9 -2h2v1h-2zM9 -1h2v1h-2zM9 0h2v1h-2z"/><path id="b103" d="M3 -10h7v1h-7zM2 -9h2v1h-2zM9 -9h2v1h-2zM2 -8h2v1h-2zM9 -8h2v1h-2zM3 -7h7v1h-7zM4 -6h2v1h-2zM7 -6h2v1h-2zM1 -5h11v1h-11zM3 -3h7v1h-7zM2 -2h2v1h-2zM9 -2h2v1h-2zM2 -1h2v1h-2zM9 -1h2v1h-2zM3 0h7v1h-7z"/><path id="b104" d="M6 -10h2v1h-2zM6 -9h2v1h-2zM5 -8h4v1h-4zM4 -7h2v1h-2zM7 -7h3v1h-3zM2 -6h3v1h-3zM8 -6h3v1h-3zM1 -4h11v1h-11zM6 -3h2v1h-2zM6 -2h2v1h-2zM6 -1h2v1h-2zM6 0h2v1h-2z"/><path id="b105" d="M3 -10h5v1h-5zM9 -10h2v1h-2zM2 -9h2v1h-2zM7 -9h4v1h-4zM3 -8h5v1h-5zM9 -8h2v1h-2zM6 -7h5v1h-5zM1 -6h6v1h-6zM9 -6h2v1h-2zM4 -5h7v1h-7zM4 -4h2v1h-2zM9 -4h2v1h-2zM2 -3h9v1h-9zM2 -2h9v1h-9zM2 -1h2v1h-2zM2 0h9v1h-9z"/><path id="b106" d="M2 -10h4v1h-4zM7 -10h4v1h-4zM1 -9h2v1h-2zM5 -9h6v1h-6zM1 -8h2v1h-2zM5 -8h6v1h-6zM1 -7h2v1h-2zM5 -7h6v1h-6zM1 -6h2v1h-2zM5 -6h6v1h-6zM2 -5h4v1h-4zM7 -5h4v1h-4zM2 -3h9v1h-9zM9 -2h2v1h-2zM9 -1h2v1h-2zM9 0h2v1h-2z"/><path id="b107" d="M3 -10h3v1h-3zM9 -10h2v1h-2zM2 -9h2v1h-2zM5 -9h2v1h-2zM9 -9h2v1h-2zM1 -8h2v1h-2zM6 -8h2v1h-2zM9 -8h2v1h-2zM1 -7h2v1h-2zM6 -7h2v1h-2zM9 -7h2v1h-2zM1 -6h2v1h-2zM6 -6h2v1h-2zM9 -6h2v1h-2zM1 -5h2v1h-2zM6 -5h2v1h-2zM9 -5h2v1h-2zM1 -4h2v1h-2zM6 -4h2v1h-2zM9 -4h2v1h-2zM1 -3h2v1h-2zM6 -3h2v1h-2zM9 -3h2v1h-2zM2 -2h2v1h-2zM5 -2h2v1h-2zM9 -2h2v1h-2zM3 -1h3v1h-3zM9 -1h2v1h-2zM9 0h2v1h-2z"/><path id="b108" d="M4 -10h2v1h-2zM8 -10h2v1h-2zM4 -9h2v1h-2zM8 -9h2v1h-2zM3 -8h3v1h-3zM8 -8h2v1h-2zM3 -7h9v1h-9zM2 -6h2v1h-2zM6 -6h4v1h-4zM1 -5h2v1h-2zM7 -5h3v1h-3zM8 -4h2v1h-2zM3 -3h7v1h-7zM2 -2h2v1h-2zM9 -2h2v1h-2zM2 -1h2v1h-2zM9 -1h2v1h-2zM3 0h7v1h-7z"/><path id="b109" d="M2 -6h4v1h-4zM8 -6h2v1h-2zM1 -5h2v1h-2zM5 -5h4v1h-4z"/><path id="b110" d="M3 -10h4v1h-4zM8 -10h2v1h-2zM8 -9h2v1h-2zM1 -8h9v1h-9zM8 -7h2v1h-2zM3 -6h4v1h-4zM8 -6h2v1h-2zM2 -5h2v1h-2zM6 -5h6v1h-6zM2 -4h2v1h-2zM6 -4h4v1h-4zM2 -3h2v1h-2zM6 -3h4v1h-4zM2 -2h2v1h-2zM6 -2h4v1h-4zM3 -1h4v1h-4zM8 -1h2v1h-2zM8 0h2v1h-2z"/><path id="b111" d="M2 -10h9v1h-9zM3 -8h2v1h-2zM8 -8h2v1h-2zM3 -7h2v1h-2zM8 -7h2v1h-2zM4 -6h2v1h-2zM7 -6h2v1h-2zM2 -5h9v1h-9zM4 -3h2v1h-2zM7 -3h2v1h-2zM4 -2h2v1h-2zM7 -2h2v1h-2zM1 -1h11v1h-11z"/><path id="b112" d="M2 -10h9v1h-9zM6 -9h2v1h-2zM5 -8h4v1h-4zM2 -7h4v1h-4zM8 -7h3v1h-3zM1 -5h11v1h-11zM6 -4h2v1h-2zM2 -3h2v1h-2zM6 -3h2v1h-2zM2 -2h2v1h-2zM2 -1h9v1h-9z"/><path id="b113" d="M3 -10h4v1h-4zM9 -10h2v1h-2zM2 -9h2v1h-2zM6 -9h2v1h-2zM9 -9h2v1h-2zM2 -8h2v1h-2zM6 -8h2v1h-2zM9 -8h2v1h-2zM2 -7h2v1h-2zM6 -7h2v1h-2zM9 -7h2v1h-2zM2 -6h2v1h-2zM6 -6h2v1h-2zM9 -6h2v1h-2zM3 -5h4v1h-4zM9 -5h2v1h-2zM9 -4h2v1h-2zM7 -3h4v1h-4zM1 -2h7v1h-7zM9 -2h2v1h-2zM9 -1h2v1h-2zM9 0h2v1h-2z"/><path id="b114" d="M2 -10h4v1h-4zM1 -9h2v1h-2zM5 -9h2v1h-2zM1 -8h2v1h-2zM5 -8h2v1h-2zM5 -7h2v1h-2zM3 -6h3v1h-3zM5 -5h2v1h-2zM5 -4h2v1h-2zM1 -3h2v1h-2zM5 -3h2v1h-2zM1 -2h2v1h-2zM5 -2h2v1h-2zM2 -1h4v1h-4z"/><path id="b115" d="M3 -2h2v1h-2zM2 -1h2v1h-2zM1 0h2v1h-2z"/><path id="b116" d="M2 -10h4v1h-4zM1 -9h2v1h-2zM5 -9h2v1h-2zM1 -8h2v1h-2zM5 -8h2v1h-2zM1 -7h2v1h-2zM5 -7h2v1h-2zM2 -6h4v1h-4zM1 -5h2v1h-2zM5 -5h2v1h-2zM1 -4h2v1h-2zM5 -4h2v1h-2zM1 -3h2v1h-2zM5 -3h2v1h-2zM1 -2h2v1h-2zM5 -2h2v1h-2zM2 -1h4v1h-4z"/><path id="b117" d="M2 -10h5v1h-5zM1 -9h2v1h-2zM1 -8h2v1h-2zM1 -7h5v1h-5zM1 -6h2v1h-2zM4 -6h3v1h-3zM5 -5h2v1h-2zM5 -4h2v1h-2zM5 -3h2v1h-2zM1 -2h2v1h-2zM4 -2h3v1h-3zM2 -1h4v1h-4z"/><path id="b118" d="M2 -10h4v1h-4zM1 -9h6v1h-6zM1 -8h2v1h-2zM5 -8h2v1h-2zM1 -7h2v1h-2zM5 -7h2v1h-2zM1 -6h2v1h-2zM5 -6h2v1h-2zM1 -5h2v1h-2zM4 -5h3v1h-3zM2 -4h5v1h-5zM5 -3h2v1h-2zM1 -2h2v1h-2zM4 -2h2v1h-2zM2 -1h4v1h-4z"/><path id="b119" d="M3 -10h4v1h-4zM2 -9h2v1h-2zM5 -9h2v1h-2zM2 -8h2v1h-2zM1 -7h2v1h-2zM1 -6h5v1h-5zM1 -5h3v1h-3zM5 -5h2v1h-2zM1 -4h2v1h-2zM5 -4h2v1h-2zM1 -3h2v1h-2zM5 -3h2v1h-2zM1 -2h2v1h-2zM5 -2h2v1h-2zM2 -1h4v1h-4z"/><path id="b120" d="M1 -10h6v1h-6zM4 -9h2v1h-2zM4 -8h2v1h-2zM3 -7h2v1h-2zM3 -6h2v1h-2zM2 -5h2v1h-2zM2 -4h2v1h-2zM2 -3h2v1h-2zM2 -2h2v1h-2zM2 -1h2v1h-2z"/></defs><g shape-rendering="crispEdges"><g fill="#f8f8f8"><use href="#b0" x="20" y="13"/><use href="#b1" x="32" y="13"/><use href="#b2" x="44" y="13"/><use href="#b3" x="56" y="13"/><use href="#b4" x="68" y="13"/><use href="#b5" x="74" y="13"/><use href="#b6" x="81" y="13"/><use href="#b7" x="88" y="13"/><use href="#b8" x="97" y="13"/><use href="#b9" x="103" y="13"/><use href="#b10" x="109" y="13"/><use href="#b11" x="113" y="13"/><use href="#b12" x="119" y="13"/><use href="#b13" x="125" y="13"/></g><g fill="#000"><use href="#b14" x="513" y="32"/><use href="#b15" x="525" y="32"/><use href="#b16" x="537" y="32"/><use href="#b17" x="549" y="32"/></g><g fill="#000"><use href="#b18" x="653" y="32"/><use href="#b19" x="660" y="32"/><use href="#b20" x="663" y="32"/><use href="#b6" x="666" y="32"/><use href="#b21" x="673" y="32"/></g><g fill="#000"><use href="#b11" x="6" y="32"/><use href="#b22" x="17" y="32"/><use href="#b14" x="29" y="32"/><use href="#b23" x="41" y="32"/></g><g fill="#000"><use href="#b12" x="67" y="32"/><use href="#b0" x="78" y="32"/><use href="#b1" x="90" y="32"/><use href="#b24" x="102" y="32"/><use href="#b25" x="114" y="32"/></g><g fill="#000"><use href="#b9" x="138" y="32"/><use href="#b2" x="149" y="32"/><use href="#b3" x="161" y="32"/><use href="#b24" x="173" y="32"/><use href="#b25" x="185" y="32"/></g><g fill="#000"><use href="#b26" x="210" y="32"/><use href="#b27" x="221" y="32"/><use href="#b28" x="233" y="32"/><use href="#b29" x="245" y="32"/><use href="#b30" x="257" y="32"/></g><g fill="#000"><use href="#b31" x="283" y="32"/><use href="#b32" x="294" y="32"/><use href="#b33" x="306" y="32"/><use href="#b34" x="318" y="32"/><use href="#b35" x="330" y="32"/></g><g fill="#000"><use href="#b36" x="355" y="32"/><use href="#b37" x="366" y="32"/><use href="#b38" x="378" y="32"/><use href="#b24" x="390" y="32"/><use href="#b25" x="402" y="32"/></g><g fill="#000"><use href="#b39" x="426" y="32"/><use href="#b1" x="437" y="32"/><use href="#b40" x="449" y="32"/><use href="#b16" x="461" y="32"/><use href="#b17" x="473" y="32"/></g><g fill="#000"><use href="#b41" x="498" y="32"/></g><g fill="#000"><use href="#b42" x="575" y="32"/><use href="#b19" x="586" y="32"/><use href="#b43" x="589" y="32"/><use href="#b44" x="596" y="32"/><use href="#b45" x="603" y="32"/><use href="#b46" x="610" y="32"/><use href="#b21" x="619" y="32"/></g><g fill="#000"><use href="#b8" x="639" y="32"/></g><g fill="#f8f8f8"><use href="#b47" x="26" y="92"/><use href="#b48" x="38" y="92"/><use href="#b49" x="50" y="92"/><use href="#b50" x="62" y="92"/><use href="#b51" x="74" y="92"/><use href="#b52" x="79" y="92"/><use href="#b53" x="91" y="92"/><use href="#b27" x="103" y="92"/><use href="#b54" x="115" y="92"/><use href="#b55" x="127" y="92"/><use href="#b56" x="139" y="92"/><use href="#b57" x="151" y="92"/></g><g fill="#000078"><use href="#b58" x="259" y="127"/><use href="#b59" x="284" y="127"/><use href="#b60" x="309" y="127"/><use href="#b61" x="334" y="127"/><use href="#b62" x="359" y="127"/><use href="#b63" x="372" y="127"/><use href="#b64" x="397" y="127"/><use href="#b65" x="422" y="127"/><use href="#b66" x="447" y="127"/><use href="#b67" x="485" y="127"/><use href="#b68" x="510" y="127"/></g><g fill="#000"><use href="#b69" x="14" y="158"/><use href="#b70" x="27" y="158"/><use href="#b71" x="40" y="158"/><use href="#b72" x="53" y="158"/><use href="#b73" x="66" y="158"/><use href="#b74" x="79" y="158"/></g><g fill="#000"><use href="#b75" x="105" y="160"/><use href="#b76" x="118" y="160"/><use href="#b77" x="131" y="160"/><use href="#b78" x="144" y="160"/><use href="#b73" x="157" y="160"/><use href="#b74" x="170" y="160"/></g><g fill="#000"><use href="#b69" x="255" y="158"/><use href="#b70" x="268" y="158"/><use href="#b71" x="281" y="158"/><use href="#b72" x="294" y="158"/><use href="#b79" x="307" y="158"/><use href="#b80" x="320" y="158"/><use href="#b81" x="333" y="158"/><use href="#b82" x="339" y="158"/><use href="#b83" x="352" y="158"/><use href="#b79" x="365" y="158"/><use href="#b80" x="378" y="158"/><use href="#b84" x="391" y="158"/><use href="#b85" x="397" y="158"/></g><clipPath id="clipinp"><rect x="439" y="147" width="33" height="12"/></clipPath><g fill="#f8f8f8" clip-path="url(#clipinp)"><use href="#b86" x="439" y="158"/><use href="#b87" x="446" y="158"/><use href="#b88" x="451" y="158"/><use href="#b89" x="458" y="158"/><use href="#b90" x="465" y="158"/></g><g fill="#000"><use href="#b91" x="478" y="159"/></g><g fill="#000"><use href="#b79" x="525" y="159"/><use href="#b80" x="538" y="159"/><use href="#b92" x="551" y="159"/><use href="#b93" x="564" y="159"/><use href="#b81" x="577" y="159"/><use href="#b94" x="583" y="159"/><use href="#b84" x="592" y="159"/></g><g fill="#000"><use href="#b95" x="632" y="159"/><use href="#b96" x="645" y="159"/><use href="#b97" x="658" y="159"/><use href="#b81" x="671" y="159"/><use href="#b98" x="677" y="159"/><use href="#b84" x="686" y="159"/></g><g fill="#000"><use href="#b99" x="734" y="159"/><use href="#b100" x="747" y="159"/><use href="#b81" x="760" y="159"/><use href="#b101" x="766" y="159"/><use href="#b84" x="775" y="159"/></g><g fill="#f8f8f8"><use href="#b73" x="45" y="191"/><use href="#b74" x="68" y="191"/></g><g fill="#f8f8f8"><use href="#b102" x="221" y="191"/><use href="#b103" x="234" y="191"/><use href="#b71" x="247" y="191"/><use href="#b104" x="260" y="191"/><use href="#b105" x="278" y="191"/><use href="#b106" x="291" y="191"/><use href="#b81" x="304" y="191"/><use href="#b107" x="310" y="191"/><use href="#b108" x="323" y="191"/><use href="#b109" x="341" y="191"/><use href="#b107" x="357" y="191"/><use href="#b110" x="370" y="191"/><use href="#b84" x="383" y="191"/></g><g fill="#f8f8f8"><use href="#b111" x="518" y="191"/><use href="#b112" x="531" y="191"/><use href="#b71" x="544" y="191"/><use href="#b104" x="557" y="191"/></g><g fill="#f8f8f8"><use href="#b113" x="662" y="191"/><use href="#b100" x="675" y="191"/><use href="#b71" x="688" y="191"/><use href="#b72" x="701" y="191"/><use href="#b100" x="714" y="191"/></g><g fill="#000"><use href="#b90" x="56" y="212"/><use href="#b89" x="63" y="212"/></g><g fill="#000"><use href="#b90" x="268" y="212"/></g><g fill="#000"><use href="#b114" x="419" y="212"/><use href="#b90" x="426" y="212"/><use href="#b90" x="433" y="212"/><use href="#b115" x="440" y="212"/><use href="#b90" x="445" y="212"/><use href="#b90" x="452" y="212"/><use href="#b90" x="459" y="212"/></g><g fill="#000"><use href="#b88" x="570" y="212"/><use href="#b116" x="577" y="212"/><use href="#b90" x="584" y="212"/><use href="#b115" x="591" y="212"/><use href="#b90" x="596" y="212"/><use href="#b90" x="603" y="212"/><use href="#b90" x="610" y="212"/></g><g fill="#000"><use href="#b117" x="735" y="212"/><use href="#b115" x="742" y="212"/><use href="#b116" x="747" y="212"/><use href="#b118" x="754" y="212"/><use href="#b90" x="761" y="212"/></g><g fill="#000"><use href="#b90" x="56" y="229"/><use href="#b88" x="63" y="229"/></g><g fill="#000"><use href="#b114" x="228" y="229"/><use href="#b90" x="235" y="229"/><use href="#b90" x="242" y="229"/><use href="#b115" x="249" y="229"/><use href="#b90" x="254" y="229"/><use href="#b90" x="261" y="229"/><use href="#b90" x="268" y="229"/></g><g fill="#000"><use href="#b114" x="419" y="229"/><use href="#b117" x="426" y="229"/><use href="#b90" x="433" y="229"/><use href="#b115" x="440" y="229"/><use href="#b90" x="445" y="229"/><use href="#b90" x="452" y="229"/><use href="#b90" x="459" y="229"/></g><g fill="#000"><use href="#b114" x="570" y="229"/><use href="#b114" x="577" y="229"/><use href="#b90" x="584" y="229"/><use href="#b115" x="591" y="229"/><use href="#b90" x="596" y="229"/><use href="#b90" x="603" y="229"/><use href="#b90" x="610" y="229"/></g><g fill="#000"><use href="#b119" x="735" y="229"/><use href="#b115" x="742" y="229"/><use href="#b118" x="747" y="229"/><use href="#b86" x="754" y="229"/><use href="#b90" x="761" y="229"/></g><g fill="#000"><use href="#b90" x="56" y="246"/><use href="#b114" x="63" y="246"/></g><g fill="#000"><use href="#b114" x="228" y="246"/><use href="#b117" x="235" y="246"/><use href="#b90" x="242" y="246"/><use href="#b115" x="249" y="246"/><use href="#b90" x="254" y="246"/><use href="#b90" x="261" y="246"/><use href="#b90" x="268" y="246"/></g><g fill="#000"><use href="#b86" x="419" y="246"/><use href="#b90" x="426" y="246"/><use href="#b90" x="433" y="246"/><use href="#b115" x="440" y="246"/><use href="#b90" x="445" y="246"/><use href="#b90" x="452" y="246"/><use href="#b90" x="459" y="246"/></g><g fill="#000"><use href="#b114" x="570" y="246"/><use href="#b116" x="577" y="246"/><use href="#b90" x="584" y="246"/><use href="#b115" x="591" y="246"/><use href="#b90" x="596" y="246"/><use href="#b90" x="603" y="246"/><use href="#b90" x="610" y="246"/></g><g fill="#000"><use href="#b120" x="735" y="246"/><use href="#b115" x="742" y="246"/><use href="#b118" x="747" y="246"/><use href="#b118" x="754" y="246"/><use href="#b90" x="761" y="246"/></g><g fill="#f8f8f8"><use href="#b90" x="56" y="263"/><use href="#b86" x="63" y="263"/></g><g fill="#f8f8f8"><use href="#b86" x="228" y="263"/><use href="#b90" x="235" y="263"/><use href="#b90" x="242" y="263"/><use href="#b115" x="249" y="263"/><use href="#b90" x="254" y="263"/><use href="#b90" x="261" y="263"/><use href="#b90" x="268" y="263"/></g><g fill="#f8f8f8"><use href="#b86" x="419" y="263"/><use href="#b117" x="426" y="263"/><use href="#b90" x="433" y="263"/><use href="#b115" x="440" y="263"/><use href="#b90" x="445" y="263"/><use href="#b90" x="452" y="263"/><use href="#b90" x="459" y="263"/></g><g fill="#f8f8f8"><use href="#b86" x="570" y="263"/><use href="#b114" x="577" y="263"/><use href="#b90" x="584" y="263"/><use href="#b115" x="591" y="263"/><use href="#b90" x="596" y="263"/><use href="#b90" x="603" y="263"/><use href="#b90" x="610" y="263"/></g><g fill="#f8f8f8"><use href="#b118" x="735" y="263"/><use href="#b115" x="742" y="263"/><use href="#b90" x="747" y="263"/><use href="#b117" x="754" y="263"/><use href="#b90" x="761" y="263"/></g><g fill="#000"><use href="#b90" x="56" y="280"/><use href="#b117" x="63" y="280"/></g><g fill="#000"><use href="#b86" x="228" y="280"/><use href="#b117" x="235" y="280"/><use href="#b90" x="242" y="280"/><use href="#b115" x="249" y="280"/><use href="#b90" x="254" y="280"/><use href="#b90" x="261" y="280"/><use href="#b90" x="268" y="280"/></g><g fill="#000"><use href="#b117" x="419" y="280"/><use href="#b90" x="426" y="280"/><use href="#b90" x="433" y="280"/><use href="#b115" x="440" y="280"/><use href="#b90" x="445" y="280"/><use href="#b90" x="452" y="280"/><use href="#b90" x="459" y="280"/></g><g fill="#000"><use href="#b86" x="570" y="280"/><use href="#b116" x="577" y="280"/><use href="#b90" x="584" y="280"/><use href="#b115" x="591" y="280"/><use href="#b90" x="596" y="280"/><use href="#b90" x="603" y="280"/><use href="#b90" x="610" y="280"/></g><g fill="#000"><use href="#b89" x="728" y="280"/><use href="#b90" x="735" y="280"/><use href="#b115" x="742" y="280"/><use href="#b89" x="747" y="280"/><use href="#b90" x="754" y="280"/><use href="#b90" x="761" y="280"/></g><g fill="#000"><use href="#b90" x="56" y="297"/><use href="#b119" x="63" y="297"/></g><g fill="#000"><use href="#b117" x="228" y="297"/><use href="#b90" x="235" y="297"/><use href="#b90" x="242" y="297"/><use href="#b115" x="249" y="297"/><use href="#b90" x="254" y="297"/><use href="#b90" x="261" y="297"/><use href="#b90" x="268" y="297"/></g><g fill="#000"><use href="#b117" x="419" y="297"/><use href="#b117" x="426" y="297"/><use href="#b90" x="433" y="297"/><use href="#b115" x="440" y="297"/><use href="#b90" x="445" y="297"/><use href="#b90" x="452" y="297"/><use href="#b90" x="459" y="297"/></g><g fill="#000"><use href="#b117" x="570" y="297"/><use href="#b114" x="577" y="297"/><use href="#b90" x="584" y="297"/><use href="#b115" x="591" y="297"/><use href="#b90" x="596" y="297"/><use href="#b90" x="603" y="297"/><use href="#b90" x="610" y="297"/></g><g fill="#000"><use href="#b89" x="728" y="297"/><use href="#b89" x="735" y="297"/><use href="#b115" x="742" y="297"/><use href="#b89" x="747" y="297"/><use href="#b117" x="754" y="297"/><use href="#b90" x="761" y="297"/></g><g fill="#000"><use href="#b90" x="56" y="314"/><use href="#b120" x="63" y="314"/></g><g fill="#000"><use href="#b117" x="228" y="314"/><use href="#b117" x="235" y="314"/><use href="#b90" x="242" y="314"/><use href="#b115" x="249" y="314"/><use href="#b90" x="254" y="314"/><use href="#b90" x="261" y="314"/><use href="#b90" x="268" y="314"/></g><g fill="#000"><use href="#b119" x="419" y="314"/><use href="#b90" x="426" y="314"/><use href="#b90" x="433" y="314"/><use href="#b115" x="440" y="314"/><use href="#b90" x="445" y="314"/><use href="#b90" x="452" y="314"/><use href="#b90" x="459" y="314"/></g><g fill="#000"><use href="#b117" x="570" y="314"/><use href="#b116" x="577" y="314"/><use href="#b90" x="584" y="314"/><use href="#b115" x="591" y="314"/><use href="#b90" x="596" y="314"/><use href="#b90" x="603" y="314"/><use href="#b90" x="610" y="314"/></g><g fill="#000"><use href="#b89" x="728" y="314"/><use href="#b88" x="735" y="314"/><use href="#b115" x="742" y="314"/><use href="#b88" x="747" y="314"/><use href="#b90" x="754" y="314"/><use href="#b90" x="761" y="314"/></g><g fill="#000"><use href="#b90" x="56" y="331"/><use href="#b116" x="63" y="331"/></g><g fill="#000"><use href="#b119" x="228" y="331"/><use href="#b90" x="235" y="331"/><use href="#b90" x="242" y="331"/><use href="#b115" x="249" y="331"/><use href="#b90" x="254" y="331"/><use href="#b90" x="261" y="331"/><use href="#b90" x="268" y="331"/></g><g fill="#000"><use href="#b119" x="419" y="331"/><use href="#b117" x="426" y="331"/><use href="#b90" x="433" y="331"/><use href="#b115" x="440" y="331"/><use href="#b90" x="445" y="331"/><use href="#b90" x="452" y="331"/><use href="#b90" x="459" y="331"/></g><g fill="#000"><use href="#b119" x="570" y="331"/><use href="#b114" x="577" y="331"/><use href="#b90" x="584" y="331"/><use href="#b115" x="591" y="331"/><use href="#b90" x="596" y="331"/><use href="#b90" x="603" y="331"/><use href="#b90" x="610" y="331"/></g><g fill="#000"><use href="#b89" x="728" y="331"/><use href="#b114" x="735" y="331"/><use href="#b115" x="742" y="331"/><use href="#b88" x="747" y="331"/><use href="#b119" x="754" y="331"/><use href="#b90" x="761" y="331"/></g><g fill="#000"><use href="#b90" x="56" y="348"/><use href="#b118" x="63" y="348"/></g><g fill="#000"><use href="#b119" x="228" y="348"/><use href="#b117" x="235" y="348"/><use href="#b90" x="242" y="348"/><use href="#b115" x="249" y="348"/><use href="#b90" x="254" y="348"/><use href="#b90" x="261" y="348"/><use href="#b90" x="268" y="348"/></g><g fill="#000"><use href="#b120" x="419" y="348"/><use href="#b90" x="426" y="348"/><use href="#b90" x="433" y="348"/><use href="#b115" x="440" y="348"/><use href="#b90" x="445" y="348"/><use href="#b90" x="452" y="348"/><use href="#b90" x="459" y="348"/></g><g fill="#000"><use href="#b119" x="570" y="348"/><use href="#b116" x="577" y="348"/><use href="#b90" x="584" y="348"/><use href="#b115" x="591" y="348"/><use href="#b90" x="596" y="348"/><use href="#b90" x="603" y="348"/><use href="#b90" x="610" y="348"/></g><g fill="#000"><use href="#b89" x="728" y="348"/><use href="#b86" x="735" y="348"/><use href="#b115" x="742" y="348"/><use href="#b114" x="747" y="348"/><use href="#b89" x="754" y="348"/><use href="#b90" x="761" y="348"/></g><g fill="#000"><use href="#b89" x="56" y="365"/><use href="#b90" x="63" y="365"/></g><g fill="#000"><use href="#b120" x="228" y="365"/><use href="#b90" x="235" y="365"/><use href="#b90" x="242" y="365"/><use href="#b115" x="249" y="365"/><use href="#b90" x="254" y="365"/><use href="#b90" x="261" y="365"/><use href="#b90" x="268" y="365"/></g><g fill="#000"><use href="#b120" x="419" y="365"/><use href="#b117" x="426" y="365"/><use href="#b90" x="433" y="365"/><use href="#b115" x="440" y="365"/><use href="#b90" x="445" y="365"/><use href="#b90" x="452" y="365"/><use href="#b90" x="459" y="365"/></g><g fill="#000"><use href="#b120" x="570" y="365"/><use href="#b114" x="577" y="365"/><use href="#b90" x="584" y="365"/><use href="#b115" x="591" y="365"/><use href="#b90" x="596" y="365"/><use href="#b90" x="603" y="365"/><use href="#b90" x="610" y="365"/></g><g fill="#000"><use href="#b89" x="728" y="365"/><use href="#b117" x="735" y="365"/><use href="#b115" x="742" y="365"/><use href="#b114" x="747" y="365"/><use href="#b119" x="754" y="365"/><use href="#b90" x="761" y="365"/></g><g fill="#000"><use href="#b89" x="56" y="382"/><use href="#b89" x="63" y="382"/></g><g fill="#000"><use href="#b120" x="228" y="382"/><use href="#b117" x="235" y="382"/><use href="#b90" x="242" y="382"/><use href="#b115" x="249" y="382"/><use href="#b90" x="254" y="382"/><use href="#b90" x="261" y="382"/><use href="#b90" x="268" y="382"/></g><g fill="#000"><use href="#b116" x="419" y="382"/><use href="#b117" x="426" y="382"/><use href="#b90" x="433" y="382"/><use href="#b115" x="440" y="382"/><use href="#b90" x="445" y="382"/><use href="#b90" x="452" y="382"/><use href="#b90" x="459" y="382"/></g><g fill="#000"><use href="#b116" x="570" y="382"/><use href="#b90" x="577" y="382"/><use href="#b90" x="584" y="382"/><use href="#b115" x="591" y="382"/><use href="#b90" x="596" y="382"/><use href="#b90" x="603" y="382"/><use href="#b90" x="610" y="382"/></g><g fill="#000"><use href="#b89" x="728" y="382"/><use href="#b119" x="735" y="382"/><use href="#b115" x="742" y="382"/><use href="#b116" x="747" y="382"/><use href="#b86" x="754" y="382"/><use href="#b90" x="761" y="382"/></g><g fill="#000"><use href="#b89" x="56" y="399"/><use href="#b88" x="63" y="399"/></g><g fill="#000"><use href="#b116" x="228" y="399"/><use href="#b117" x="235" y="399"/><use href="#b90" x="242" y="399"/><use href="#b115" x="249" y="399"/><use href="#b90" x="254" y="399"/><use href="#b90" x="261" y="399"/><use href="#b90" x="268" y="399"/></g><g fill="#000"><use href="#b118" x="419" y="399"/><use href="#b117" x="426" y="399"/><use href="#b90" x="433" y="399"/><use href="#b115" x="440" y="399"/><use href="#b90" x="445" y="399"/><use href="#b90" x="452" y="399"/><use href="#b90" x="459" y="399"/></g><g fill="#000"><use href="#b118" x="570" y="399"/><use href="#b90" x="577" y="399"/><use href="#b90" x="584" y="399"/><use href="#b115" x="591" y="399"/><use href="#b90" x="596" y="399"/><use href="#b90" x="603" y="399"/><use href="#b90" x="610" y="399"/></g><g fill="#000"><use href="#b89" x="728" y="399"/><use href="#b116" x="735" y="399"/><use href="#b115" x="742" y="399"/><use href="#b118" x="747" y="399"/><use href="#b86" x="754" y="399"/><use href="#b90" x="761" y="399"/></g><g fill="#000"><use href="#b89" x="56" y="416"/><use href="#b114" x="63" y="416"/></g><g fill="#000"><use href="#b118" x="228" y="416"/><use href="#b117" x="235" y="416"/><use href="#b90" x="242" y="416"/><use href="#b115" x="249" y="416"/><use href="#b90" x="254" y="416"/><use href="#b90" x="261" y="416"/><use href="#b90" x="268" y="416"/></g><g fill="#000"><use href="#b89" x="407" y="416"/><use href="#b115" x="414" y="416"/><use href="#b90" x="419" y="416"/><use href="#b117" x="426" y="416"/><use href="#b90" x="433" y="416"/><use href="#b115" x="440" y="416"/><use href="#b90" x="445" y="416"/><use href="#b90" x="452" y="416"/><use href="#b90" x="459" y="416"/></g><g fill="#000"><use href="#b89" x="558" y="416"/><use href="#b115" x="565" y="416"/><use href="#b90" x="570" y="416"/><use href="#b90" x="577" y="416"/><use href="#b90" x="584" y="416"/><use href="#b115" x="591" y="416"/><use href="#b90" x="596" y="416"/><use href="#b90" x="603" y="416"/><use href="#b90" x="610" y="416"/></g><g fill="#000"><use href="#b88" x="728" y="416"/><use href="#b89" x="735" y="416"/><use href="#b115" x="742" y="416"/><use href="#b90" x="747" y="416"/><use href="#b117" x="754" y="416"/><use href="#b90" x="761" y="416"/></g><g fill="#000"><use href="#b89" x="56" y="433"/><use href="#b86" x="63" y="433"/></g><g fill="#000"><use href="#b89" x="216" y="433"/><use href="#b115" x="223" y="433"/><use href="#b90" x="228" y="433"/><use href="#b117" x="235" y="433"/><use href="#b90" x="242" y="433"/><use href="#b115" x="249" y="433"/><use href="#b90" x="254" y="433"/><use href="#b90" x="261" y="433"/><use href="#b90" x="268" y="433"/></g><g fill="#000"><use href="#b89" x="407" y="433"/><use href="#b115" x="414" y="433"/><use href="#b89" x="419" y="433"/><use href="#b117" x="426" y="433"/><use href="#b90" x="433" y="433"/><use href="#b115" x="440" y="433"/><use href="#b90" x="445" y="433"/><use href="#b90" x="452" y="433"/><use href="#b90" x="459" y="433"/></g><g fill="#000"><use href="#b89" x="558" y="433"/><use href="#b115" x="565" y="433"/><use href="#b89" x="570" y="433"/><use href="#b90" x="577" y="433"/><use href="#b90" x="584" y="433"/><use href="#b115" x="591" y="433"/><use href="#b90" x="596" y="433"/><use href="#b90" x="603" y="433"/><use href="#b90" x="610" y="433"/></g><g fill="#000"><use href="#b88" x="728" y="433"/><use href="#b114" x="735" y="433"/><use href="#b115" x="742" y="433"/><use href="#b89" x="747" y="433"/><use href="#b117" x="754" y="433"/><use href="#b90" x="761" y="433"/></g><g fill="#000"><use href="#b89" x="56" y="450"/><use href="#b117" x="63" y="450"/></g><g fill="#000"><use href="#b89" x="216" y="450"/><use href="#b115" x="223" y="450"/><use href="#b89" x="228" y="450"/><use href="#b117" x="235" y="450"/><use href="#b90" x="242" y="450"/><use href="#b115" x="249" y="450"/><use href="#b90" x="254" y="450"/><use href="#b90" x="261" y="450"/><use href="#b90" x="268" y="450"/></g><g fill="#000"><use href="#b89" x="407" y="450"/><use href="#b115" x="414" y="450"/><use href="#b88" x="419" y="450"/><use href="#b117" x="426" y="450"/><use href="#b90" x="433" y="450"/><use href="#b115" x="440" y="450"/><use href="#b90" x="445" y="450"/><use href="#b90" x="452" y="450"/><use href="#b90" x="459" y="450"/></g><g fill="#000"><use href="#b89" x="558" y="450"/><use href="#b115" x="565" y="450"/><use href="#b88" x="570" y="450"/><use href="#b90" x="577" y="450"/><use href="#b90" x="584" y="450"/><use href="#b115" x="591" y="450"/><use href="#b90" x="596" y="450"/><use href="#b90" x="603" y="450"/><use href="#b90" x="610" y="450"/></g><g fill="#000"><use href="#b88" x="728" y="450"/><use href="#b117" x="735" y="450"/><use href="#b115" x="742" y="450"/><use href="#b88" x="747" y="450"/><use href="#b119" x="754" y="450"/><use href="#b90" x="761" y="450"/></g><g fill="#000"><use href="#b89" x="56" y="467"/><use href="#b119" x="63" y="467"/></g><g fill="#000"><use href="#b89" x="216" y="467"/><use href="#b115" x="223" y="467"/><use href="#b88" x="228" y="467"/><use href="#b117" x="235" y="467"/><use href="#b90" x="242" y="467"/><use href="#b115" x="249" y="467"/><use href="#b90" x="254" y="467"/><use href="#b90" x="261" y="467"/><use href="#b90" x="268" y="467"/></g><g fill="#000"><use href="#b89" x="407" y="467"/><use href="#b115" x="414" y="467"/><use href="#b114" x="419" y="467"/><use href="#b117" x="426" y="467"/><use href="#b90" x="433" y="467"/><use href="#b115" x="440" y="467"/><use href="#b90" x="445" y="467"/><use href="#b90" x="452" y="467"/><use href="#b90" x="459" y="467"/></g><g fill="#000"><use href="#b89" x="558" y="467"/><use href="#b115" x="565" y="467"/><use href="#b114" x="570" y="467"/><use href="#b90" x="577" y="467"/><use href="#b90" x="584" y="467"/><use href="#b115" x="591" y="467"/><use href="#b90" x="596" y="467"/><use href="#b90" x="603" y="467"/><use href="#b90" x="610" y="467"/></g><g fill="#000"><use href="#b88" x="728" y="467"/><use href="#b120" x="735" y="467"/><use href="#b115" x="742" y="467"/><use href="#b114" x="747" y="467"/><use href="#b119" x="754" y="467"/><use href="#b90" x="761" y="467"/></g><g fill="#000"><use href="#b89" x="56" y="484"/><use href="#b120" x="63" y="484"/></g><g fill="#000"><use href="#b89" x="216" y="484"/><use href="#b115" x="223" y="484"/><use href="#b114" x="228" y="484"/><use href="#b117" x="235" y="484"/><use href="#b90" x="242" y="484"/><use href="#b115" x="249" y="484"/><use href="#b90" x="254" y="484"/><use href="#b90" x="261" y="484"/><use href="#b90" x="268" y="484"/></g><g fill="#000"><use href="#b89" x="407" y="484"/><use href="#b115" x="414" y="484"/><use href="#b86" x="419" y="484"/><use href="#b117" x="426" y="484"/><use href="#b90" x="433" y="484"/><use href="#b115" x="440" y="484"/><use href="#b90" x="445" y="484"/><use href="#b90" x="452" y="484"/><use href="#b90" x="459" y="484"/></g><g fill="#000"><use href="#b89" x="558" y="484"/><use href="#b115" x="565" y="484"/><use href="#b86" x="570" y="484"/><use href="#b90" x="577" y="484"/><use href="#b90" x="584" y="484"/><use href="#b115" x="591" y="484"/><use href="#b90" x="596" y="484"/><use href="#b90" x="603" y="484"/><use href="#b90" x="610" y="484"/></g><g fill="#000"><use href="#b88" x="728" y="484"/><use href="#b118" x="735" y="484"/><use href="#b115" x="742" y="484"/><use href="#b86" x="747" y="484"/><use href="#b120" x="754" y="484"/><use href="#b90" x="761" y="484"/></g><g fill="#000"><use href="#b89" x="56" y="501"/><use href="#b116" x="63" y="501"/></g><g fill="#000"><use href="#b89" x="216" y="501"/><use href="#b115" x="223" y="501"/><use href="#b86" x="228" y="501"/><use href="#b117" x="235" y="501"/><use href="#b90" x="242" y="501"/><use href="#b115" x="249" y="501"/><use href="#b90" x="254" y="501"/><use href="#b90" x="261" y="501"/><use href="#b90" x="268" y="501"/></g><g fill="#000"><use href="#b89" x="407" y="501"/><use href="#b115" x="414" y="501"/><use href="#b117" x="419" y="501"/><use href="#b117" x="426" y="501"/><use href="#b90" x="433" y="501"/><use href="#b115" x="440" y="501"/><use href="#b90" x="445" y="501"/><use href="#b90" x="452" y="501"/><use href="#b90" x="459" y="501"/></g><g fill="#000"><use href="#b89" x="558" y="501"/><use href="#b115" x="565" y="501"/><use href="#b117" x="570" y="501"/><use href="#b90" x="577" y="501"/><use href="#b90" x="584" y="501"/><use href="#b115" x="591" y="501"/><use href="#b90" x="596" y="501"/><use href="#b90" x="603" y="501"/><use href="#b90" x="610" y="501"/></g><g fill="#000"><use href="#b114" x="728" y="501"/><use href="#b89" x="735" y="501"/><use href="#b115" x="742" y="501"/><use href="#b117" x="747" y="501"/><use href="#b120" x="754" y="501"/><use href="#b90" x="761" y="501"/></g><g fill="#000"><use href="#b89" x="56" y="518"/><use href="#b118" x="63" y="518"/></g><g fill="#000"><use href="#b89" x="216" y="518"/><use href="#b115" x="223" y="518"/><use href="#b117" x="228" y="518"/><use href="#b117" x="235" y="518"/><use href="#b90" x="242" y="518"/><use href="#b115" x="249" y="518"/><use href="#b90" x="254" y="518"/><use href="#b90" x="261" y="518"/><use href="#b90" x="268" y="518"/></g><g fill="#000"><use href="#b89" x="407" y="518"/><use href="#b115" x="414" y="518"/><use href="#b119" x="419" y="518"/><use href="#b117" x="426" y="518"/><use href="#b90" x="433" y="518"/><use href="#b115" x="440" y="518"/><use href="#b90" x="445" y="518"/><use href="#b90" x="452" y="518"/><use href="#b90" x="459" y="518"/></g><g fill="#000"><use href="#b89" x="558" y="518"/><use href="#b115" x="565" y="518"/><use href="#b119" x="570" y="518"/><use href="#b90" x="577" y="518"/><use href="#b90" x="584" y="518"/><use href="#b115" x="591" y="518"/><use href="#b90" x="596" y="518"/><use href="#b90" x="603" y="518"/><use href="#b90" x="610" y="518"/></g><g fill="#000"><use href="#b114" x="728" y="518"/><use href="#b114" x="735" y="518"/><use href="#b115" x="742" y="518"/><use href="#b119" x="747" y="518"/><use href="#b116" x="754" y="518"/><use href="#b90" x="761" y="518"/></g><g fill="#000"><use href="#b88" x="56" y="535"/><use href="#b90" x="63" y="535"/></g><g fill="#000"><use href="#b89" x="216" y="535"/><use href="#b115" x="223" y="535"/><use href="#b119" x="228" y="535"/><use href="#b117" x="235" y="535"/><use href="#b90" x="242" y="535"/><use href="#b115" x="249" y="535"/><use href="#b90" x="254" y="535"/><use href="#b90" x="261" y="535"/><use href="#b90" x="268" y="535"/></g><g fill="#000"><use href="#b89" x="407" y="535"/><use href="#b115" x="414" y="535"/><use href="#b120" x="419" y="535"/><use href="#b117" x="426" y="535"/><use href="#b90" x="433" y="535"/><use href="#b115" x="440" y="535"/><use href="#b90" x="445" y="535"/><use href="#b90" x="452" y="535"/><use href="#b90" x="459" y="535"/></g><g fill="#000"><use href="#b89" x="558" y="535"/><use href="#b115" x="565" y="535"/><use href="#b120" x="570" y="535"/><use href="#b90" x="577" y="535"/><use href="#b90" x="584" y="535"/><use href="#b115" x="591" y="535"/><use href="#b90" x="596" y="535"/><use href="#b90" x="603" y="535"/><use href="#b90" x="610" y="535"/></g><g fill="#000"><use href="#b114" x="728" y="535"/><use href="#b117" x="735" y="535"/><use href="#b115" x="742" y="535"/><use href="#b120" x="747" y="535"/><use href="#b116" x="754" y="535"/><use href="#b90" x="761" y="535"/></g></g></svg>
<div style="left:741px;top:335px;width:44px;height:24px;background:#b8b8b8;border-top:1px solid #f8f8f8;border-left:1px solid #f8f8f8;border-right:1px solid #787878;border-bottom:1px solid #787878;"></div>
<div style="left:744px;top:338px;width:19px;height:18px;background-color:#f8f8f8;background-image:linear-gradient(45deg,#b8b8b8 25%,transparent 25%,transparent 75%,#b8b8b8 75%),linear-gradient(45deg,#b8b8b8 25%,transparent 25%,transparent 75%,#b8b8b8 75%);background-size:2px 2px;background-position:0 0,1px 1px;"></div>
<svg style="position:absolute;left:744px;top:338px" width="19" height="18"><text x="1" y="16" font-family="Liberation Serif" font-size="21" fill="#000">A</text></svg>
<svg class="ov" width="800" height="600" viewBox="0 0 800 600"><defs><path id="c0" d="M2 -10h4v1h-4zM1 -9h2v1h-2zM5 -9h2v1h-2zM1 -8h2v1h-2zM5 -8h2v1h-2zM5 -7h2v1h-2zM4 -6h3v1h-3zM3 -5h3v1h-3zM2 -4h2v1h-2zM1 -3h2v1h-2zM1 -2h2v1h-2zM1 -1h6v1h-6z"/><path id="c1" d="M2 -10h4v1h-4zM2 -9h4v1h-4zM1 -8h2v1h-2zM5 -8h2v1h-2zM1 -7h2v1h-2zM5 -7h2v1h-2zM1 -6h2v1h-2zM5 -6h2v1h-2zM1 -5h2v1h-2zM5 -5h2v1h-2zM1 -4h2v1h-2zM5 -4h2v1h-2zM1 -3h2v1h-2zM5 -3h2v1h-2zM2 -2h4v1h-4zM2 -1h4v1h-4z"/><path id="c2" d="M4 -10h2v1h-2zM4 -9h2v1h-2zM3 -8h3v1h-3zM2 -7h4v1h-4zM2 -6h4v1h-4zM2 -5h4v1h-4zM1 -4h2v1h-2zM4 -4h2v1h-2zM1 -3h7v1h-7zM4 -2h2v1h-2zM4 -1h2v1h-2z"/><path id="c3" d="M2 -10h2v1h-2zM9 -10h2v1h-2zM2 -9h2v1h-2zM9 -9h2v1h-2zM2 -8h2v1h-2zM6 -8h5v1h-5zM2 -7h2v1h-2zM6 -7h5v1h-5zM2 -6h2v1h-2zM9 -6h2v1h-2zM2 -5h2v1h-2zM7 -5h4v1h-4zM2 -4h6v1h-6zM9 -4h2v1h-2zM2 -3h2v1h-2zM9 -3h2v1h-2zM2 -2h2v1h-2zM2 -1h9v1h-9z"/><path id="c4" d="M2 -11h4v1h-4zM2 -10h2v1h-2zM2 -9h2v1h-2zM2 -8h2v1h-2zM2 -7h2v1h-2zM2 -6h2v1h-2zM2 -5h2v1h-2zM2 -4h2v1h-2zM2 -3h2v1h-2zM2 -2h2v1h-2zM2 -1h2v1h-2zM2 0h4v1h-4z"/><path id="c5" d="M2 -10h9v1h-9zM2 -9h2v1h-2zM7 -9h4v1h-4zM2 -8h2v1h-2zM7 -8h4v1h-4zM2 -7h2v1h-2zM7 -7h4v1h-4zM2 -6h9v1h-9zM2 -5h2v1h-2zM7 -5h4v1h-4zM2 -4h2v1h-2zM7 -4h4v1h-4zM2 -3h2v1h-2zM7 -3h4v1h-4zM2 -2h2v1h-2zM7 -2h4v1h-4zM2 -1h9v1h-9zM7 0h4v1h-4z"/><path id="c6" d="M6 -10h2v1h-2zM6 -9h2v1h-2zM5 -8h3v1h-3zM4 -7h2v1h-2zM7 -7h2v1h-2zM4 -6h2v1h-2zM7 -6h3v1h-3zM2 -5h3v1h-3zM8 -5h3v1h-3zM1 -1h11v1h-11z"/><path id="c7" d="M2 -10h9v1h-9zM2 -9h2v1h-2zM2 -8h2v1h-2zM2 -7h9v1h-9zM2 -6h2v1h-2zM2 -5h2v1h-2zM2 -4h9v1h-9zM1 -1h11v1h-11z"/><path id="c8" d="M1 -11h4v1h-4zM3 -10h2v1h-2zM3 -9h2v1h-2zM3 -8h2v1h-2zM3 -7h2v1h-2zM3 -6h2v1h-2zM3 -5h2v1h-2zM3 -4h2v1h-2zM3 -3h2v1h-2zM3 -2h2v1h-2zM3 -1h2v1h-2zM1 0h4v1h-4z"/><path id="c9" d="M8 -14h1v1h-1zM13 -14h1v1h-1zM2 -13h2v1h-2zM8 -13h1v1h-1zM13 -13h1v1h-1zM3 -12h14v1h-14zM8 -11h1v1h-1zM13 -11h1v1h-1zM8 -10h6v1h-6zM8 -9h1v1h-1zM10 -9h1v1h-1zM13 -9h1v1h-1zM2 -8h2v1h-2zM6 -8h10v1h-10zM6 -7h10v1h-10zM10 -6h1v1h-1zM6 -5h9v1h-9zM3 -4h1v1h-1zM10 -4h1v1h-1zM3 -3h1v1h-1zM5 -3h12v1h-12zM2 -2h1v1h-1zM9 -2h1v1h-1zM11 -2h1v1h-1zM2 -1h1v1h-1zM7 -1h2v1h-2zM12 -1h2v1h-2zM2 0h1v1h-1zM4 0h3v1h-3zM14 0h3v1h-3z"/></defs><g shape-rendering="crispEdges"><g fill="#000"><use href="#c0" x="690" y="59"/><use href="#c1" x="697" y="59"/><use href="#c1" x="704" y="59"/><use href="#c2" x="711" y="59"/><use href="#c3" x="718" y="59"/></g><g fill="#000"><use href="#c4" x="738" y="60"/></g><g fill="#000"><use href="#c5" x="744" y="59"/></g><g fill="#000"><use href="#c6" x="758" y="59"/><use href="#c7" x="771" y="59"/></g><g fill="#000"><use href="#c8" x="785" y="60"/></g><g fill="#000"><use href="#c9" x="763" y="353"/></g></g></svg>
</body></html>
